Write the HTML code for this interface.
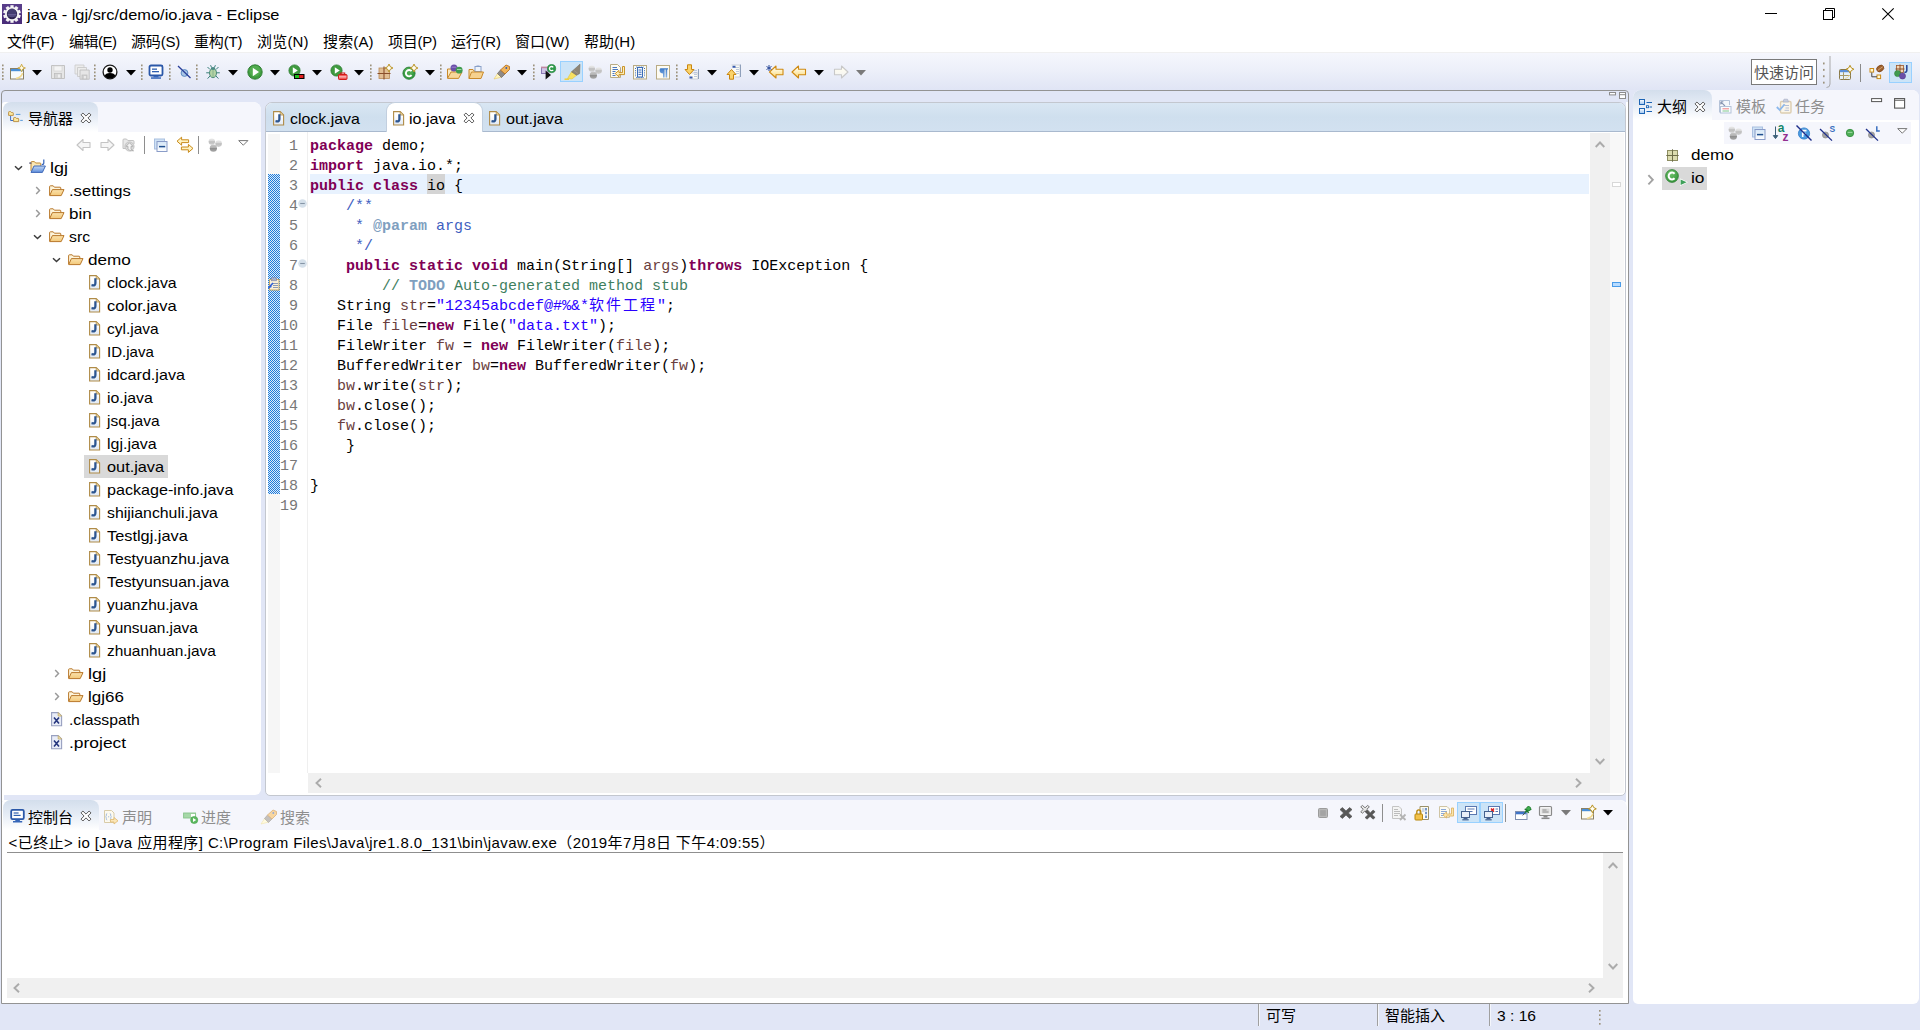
<!DOCTYPE html><html lang="zh-CN"><head><meta charset="utf-8"><title>java - lgj/src/demo/io.java - Eclipse</title><style>
*{box-sizing:border-box;margin:0;padding:0}
html,body{width:1920px;height:1030px;overflow:hidden;background:#e1e6f6}
body{position:relative;font-family:"Liberation Sans","Noto Sans CJK SC",sans-serif;font-size:15px;color:#000}
div,span.t,span.m,span.g,svg.i,pre{position:absolute}
span.t,span.g,span.m{white-space:pre;line-height:20px;height:20px}
span.t{color:#000}
span.g{color:#8e8e8e}
.zh{letter-spacing:2px}
pre{font-family:"Liberation Mono","Noto Sans CJK SC",monospace;font-size:15px;line-height:20px;height:20px;white-space:pre;color:#000}
pre b{color:#7f0055}
.c{color:#3f5fbf}.ct{color:#7f9fbf;font-weight:bold}.cm{color:#3f7f5f}.s{color:#2a00ff}.v{color:#6a3e3e}
.ln{color:#787878;text-align:right;width:40px}
svg.i{overflow:visible}
</style></head><body>
<div style="left:0px;top:0px;width:1920px;height:52px;background:#fff"></div>
<svg class="i" style="left:2px;top:4px" width="20" height="20" viewBox="0 0 20 20"><rect x="0" y="0" width="20" height="20" fill="#4a2d7a"/><rect x="0" y="0" width="20" height="10" fill="#5e4490" opacity=".7"/><g fill="#f4f4f4"><rect x="8.4" y="1.2" width="3.2" height="4" transform="rotate(0 10 10)"/><rect x="8.4" y="1.2" width="3.2" height="4" transform="rotate(36 10 10)"/><rect x="8.4" y="1.2" width="3.2" height="4" transform="rotate(72 10 10)"/><rect x="8.4" y="1.2" width="3.2" height="4" transform="rotate(108 10 10)"/><rect x="8.4" y="1.2" width="3.2" height="4" transform="rotate(144 10 10)"/><rect x="8.4" y="1.2" width="3.2" height="4" transform="rotate(180 10 10)"/><rect x="8.4" y="1.2" width="3.2" height="4" transform="rotate(216 10 10)"/><rect x="8.4" y="1.2" width="3.2" height="4" transform="rotate(252 10 10)"/><rect x="8.4" y="1.2" width="3.2" height="4" transform="rotate(288 10 10)"/><rect x="8.4" y="1.2" width="3.2" height="4" transform="rotate(324 10 10)"/></g><circle cx="10" cy="10" r="7" fill="#f4f4f4"/><circle cx="10" cy="10" r="5.2" fill="#2c2450"/><circle cx="10" cy="9" r="4.4" fill="#4a4478" opacity=".8"/><path d="M5.5 10.5h9 M5.8 12h8.4" stroke="#8a80b8" stroke-width=".6" opacity=".8"/></svg>
<span class="t" style="left:27px;top:5px;transform:scaleX(1.0934);transform-origin:0 50%;">java - lgj/src/demo/io.java - Eclipse</span>
<svg class="i" style="left:1760px;top:4px" width="150" height="22" viewBox="0 0 150 22"><path d="M5 9.5h12" stroke="#000" stroke-width="1"/><rect x="63.5" y="6.5" width="9" height="9" fill="none" stroke="#000"/><path d="M65.5 6.5v-2h9v9h-2" fill="none" stroke="#000"/><path d="M122.3 4.3l11.4 11.4M133.7 4.3L122.3 15.7" stroke="#000" stroke-width="1.1"/></svg>
<span class="t" style="left:7px;top:31.5px;letter-spacing:-0.389px;">文件(F)</span>
<span class="t" style="left:69px;top:31.5px;letter-spacing:-0.500px;">编辑(E)</span>
<span class="t" style="left:131px;top:31.5px;letter-spacing:-0.175px;">源码(S)</span>
<span class="t" style="left:194px;top:31.5px;letter-spacing:-0.139px;">重构(T)</span>
<span class="t" style="left:257px;top:31.5px;letter-spacing:0.193px;">浏览(N)</span>
<span class="t" style="left:323px;top:31.5px;letter-spacing:0.150px;">搜索(A)</span>
<span class="t" style="left:388px;top:31.5px;letter-spacing:-0.250px;">项目(P)</span>
<span class="t" style="left:451px;top:31.5px;letter-spacing:-0.207px;">运行(R)</span>
<span class="t" style="left:515px;top:31.5px;letter-spacing:0.111px;">窗口(W)</span>
<span class="t" style="left:584px;top:31.5px;letter-spacing:0.118px;">帮助(H)</span>
<div style="left:0px;top:52px;width:1920px;height:38px;background:linear-gradient(#f6f7fd,#eceff9 50%,#e0e5f5)"></div>
<div style="left:0px;top:52px;width:1920px;height:1px;background:#f0f0f0"></div>
<div style="left:560px;top:61px;width:23px;height:21px;background:#cce4f7;border:1px solid #99d1ff"></div>
<svg class="i" style="left:563px;top:62.5px" width="18" height="18" viewBox="0 0 18 18"><path d="M1.5 16.2 H6" stroke="#f0d040" stroke-width="1.6"/><path d="M4.5 15.5 L8.5 8.8 L13.6 12.2 L9 16z" fill="#f7e060" stroke="#e6c838" stroke-width=".6"/><path d="M8.5 8.8 L17 1.2 L16.6 10.6 L13.6 12.2z" fill="#8e8676" stroke="#766e5e" stroke-width=".6"/><path d="M11 7.5 L15 10.5" stroke="#a49c8a" stroke-width=".8"/></svg>
<svg class="i" style="left:2px;top:64px" width="2" height="16" viewBox="0 0 2 16"><rect x="0" y="0.5" width="1.6" height="1.8" fill="#9c927c"/><rect x="0" y="4" width="1.6" height="1.8" fill="#9c927c"/><rect x="0" y="7.5" width="1.6" height="1.8" fill="#9c927c"/><rect x="0" y="11" width="1.6" height="1.8" fill="#9c927c"/><rect x="0" y="14.2" width="1.6" height="1.8" fill="#9c927c"/></svg>
<svg class="i" style="left:9px;top:64px" width="16" height="16" viewBox="0 0 16 16"><rect x="1.5" y="4.5" width="13" height="10.5" fill="#f7fafe" stroke="#8a8064" /><rect x="2" y="5" width="12" height="2.2" fill="#4a90d9"/><path d="M7 14.4 Q12.5 13.4 13.6 9" stroke="#f1d88a" fill="none" stroke-width="1.5"/><path d="M12.6 0.2 L13.8 3 L16.4 4 L13.8 5 L12.6 7.8 L11.4 5 L8.8 4 L11.4 3z" fill="#fffbe6" stroke="#c9a43a" stroke-width="0.9"/></svg>
<svg class="i" style="left:32px;top:70px" width="10" height="5" viewBox="0 0 10 5"><path d="M0 0h10L5 5.4z" fill="#000"/></svg>
<svg class="i" style="left:50px;top:64px" width="16" height="16" viewBox="0 0 16 16"><path d="M1.5 1.5h13v13h-13z" fill="#e6e6e6" stroke="#c2c2c2"/><rect x="4" y="2" width="8" height="5" fill="#f4f4f4" stroke="#cfcfcf" stroke-width=".6"/><rect x="4.5" y="9.5" width="7" height="5" fill="#d6d6d6" stroke="#bdbdbd" stroke-width=".8"/><rect x="8" y="10.5" width="2" height="3" fill="#efefef"/></svg>
<svg class="i" style="left:74px;top:64px" width="16" height="16" viewBox="0 0 16 16"><path d="M1 1h9v9h-9z" fill="#ececec" stroke="#cacaca" stroke-width=".8"/><path d="M3.5 3.5h9v9h-9z" fill="#ececec" stroke="#c6c6c6" stroke-width=".8"/><path d="M6 6h9.2v9.2H6z" fill="#e6e6e6" stroke="#c0c0c0" stroke-width=".9"/><rect x="8" y="11" width="5" height="4" fill="#d2d2d2" stroke="#bcbcbc" stroke-width=".7"/><rect x="10.2" y="12" width="1.5" height="2.4" fill="#f2f2f2"/></svg>
<svg class="i" style="left:94px;top:64px" width="2" height="16" viewBox="0 0 2 16"><rect x="0" y="0.5" width="1.6" height="1.8" fill="#9c927c"/><rect x="0" y="4" width="1.6" height="1.8" fill="#9c927c"/><rect x="0" y="7.5" width="1.6" height="1.8" fill="#9c927c"/><rect x="0" y="11" width="1.6" height="1.8" fill="#9c927c"/><rect x="0" y="14.2" width="1.6" height="1.8" fill="#9c927c"/></svg>
<svg class="i" style="left:102px;top:64px" width="16" height="16" viewBox="0 0 16 16"><circle cx="8" cy="8" r="6.9" fill="#fff" stroke="#1a1a1a" stroke-width="1.3"/><circle cx="8" cy="6" r="2.7" fill="#000"/><path d="M2.6 12.2 Q3.4 9 8 9 Q12.6 9 13.4 12.2 Q11 14.6 8 14.6 Q5 14.6 2.6 12.2z" fill="#000"/></svg>
<svg class="i" style="left:126px;top:70px" width="10" height="5" viewBox="0 0 10 5"><path d="M0 0h10L5 5.4z" fill="#000"/></svg>
<svg class="i" style="left:141px;top:64px" width="2" height="16" viewBox="0 0 2 16"><rect x="0" y="0.5" width="1.6" height="1.8" fill="#9c927c"/><rect x="0" y="4" width="1.6" height="1.8" fill="#9c927c"/><rect x="0" y="7.5" width="1.6" height="1.8" fill="#9c927c"/><rect x="0" y="11" width="1.6" height="1.8" fill="#9c927c"/><rect x="0" y="14.2" width="1.6" height="1.8" fill="#9c927c"/></svg>
<svg class="i" style="left:148px;top:64px" width="16" height="16" viewBox="0 0 16 16"><rect x="1.5" y="1.5" width="13" height="10" rx="1.5" fill="#fff" stroke="#2a57a8" stroke-width="1.8"/><rect x="4" y="4.5" width="5" height="1.3" fill="#2f5fb0"/><rect x="4" y="7" width="7" height="1.3" fill="#2f5fb0"/><rect x="5.5" y="12" width="5" height="1.4" fill="#3666b8"/><rect x="3" y="13.3" width="10" height="1.5" fill="#3666b8"/></svg>
<svg class="i" style="left:169px;top:64px" width="2" height="16" viewBox="0 0 2 16"><rect x="0" y="0.5" width="1.6" height="1.8" fill="#9c927c"/><rect x="0" y="4" width="1.6" height="1.8" fill="#9c927c"/><rect x="0" y="7.5" width="1.6" height="1.8" fill="#9c927c"/><rect x="0" y="11" width="1.6" height="1.8" fill="#9c927c"/><rect x="0" y="14.2" width="1.6" height="1.8" fill="#9c927c"/></svg>
<svg class="i" style="left:176px;top:64px" width="16" height="16" viewBox="0 0 16 16"><circle cx="8.5" cy="9" r="3.4" fill="#a9c6e6" stroke="#5c8ac2" stroke-width="1"/><path d="M2 2 L14.5 14" stroke="#2a3f9a" stroke-width="1.3"/></svg>
<svg class="i" style="left:196px;top:64px" width="2" height="16" viewBox="0 0 2 16"><rect x="0" y="0.5" width="1.6" height="1.8" fill="#9c927c"/><rect x="0" y="4" width="1.6" height="1.8" fill="#9c927c"/><rect x="0" y="7.5" width="1.6" height="1.8" fill="#9c927c"/><rect x="0" y="11" width="1.6" height="1.8" fill="#9c927c"/><rect x="0" y="14.2" width="1.6" height="1.8" fill="#9c927c"/></svg>
<svg class="i" style="left:205px;top:64px" width="16" height="16" viewBox="0 0 16 16"><g stroke="#3a7f7a" stroke-width="1" fill="none"><path d="M5 5.5 L2.5 3 M11 5.5 L13.5 3 M4.2 8.8 H1.2 M11.8 8.8 H14.8 M5 12 L2.6 14.6 M11 12 L13.4 14.6 M6.6 3.6 L5.6 1.2 M9.4 3.6 L10.4 1.2"/></g><ellipse cx="8" cy="9" rx="3.5" ry="4.7" fill="#b4d4a4" stroke="#4a8a78" stroke-width="1"/><ellipse cx="8" cy="4.5" rx="2.1" ry="1.6" fill="#4a8a84"/><path d="M8 5.5 V13.5" stroke="#7aa88a" stroke-width=".7"/></svg>
<svg class="i" style="left:228px;top:70px" width="10" height="5" viewBox="0 0 10 5"><path d="M0 0h10L5 5.4z" fill="#000"/></svg>
<svg class="i" style="left:247px;top:64px" width="16" height="16" viewBox="0 0 16 16"><circle cx="8" cy="8" r="7.2" fill="#3f9b3f" stroke="#2a7a2e" stroke-width=".9"/><circle cx="8" cy="7" r="5.5" fill="#5fb75a" opacity=".6"/><path d="M5.8 3.8 L12 8 L5.8 12.2z" fill="#fff"/></svg>
<svg class="i" style="left:270px;top:70px" width="10" height="5" viewBox="0 0 10 5"><path d="M0 0h10L5 5.4z" fill="#000"/></svg>
<svg class="i" style="left:288px;top:64px" width="18" height="16" viewBox="0 0 18 16"><circle cx="6.5" cy="6.5" r="5.6" fill="#3f9b3f" stroke="#2a7a2e" stroke-width=".8"/><path d="M4.8 3.2 L9.8 6.5 L4.8 9.8z" fill="#fff"/><rect x="6" y="10" width="10.5" height="5" fill="#000"/><rect x="7" y="11" width="4" height="3" fill="#1fc01f"/><rect x="11.2" y="11" width="4.2" height="3" fill="#e21f1f"/></svg>
<svg class="i" style="left:312px;top:70px" width="10" height="5" viewBox="0 0 10 5"><path d="M0 0h10L5 5.4z" fill="#000"/></svg>
<svg class="i" style="left:330px;top:64px" width="18" height="16" viewBox="0 0 18 16"><circle cx="6.5" cy="6.5" r="5.6" fill="#3f9b3f" stroke="#2a7a2e" stroke-width=".8"/><path d="M4.8 3.2 L9.8 6.5 L4.8 9.8z" fill="#fff"/><rect x="8.5" y="10.5" width="8.5" height="5" rx=".8" fill="#f25a5a" stroke="#d11a1a" stroke-width="1"/><path d="M10.8 10.3 V9 H14.7 V10.3" stroke="#d11a1a" fill="none" stroke-width="1.1"/><rect x="9" y="12.4" width="7.5" height="1" fill="#fff" opacity=".8"/></svg>
<svg class="i" style="left:354px;top:70px" width="10" height="5" viewBox="0 0 10 5"><path d="M0 0h10L5 5.4z" fill="#000"/></svg>
<svg class="i" style="left:370px;top:64px" width="2" height="16" viewBox="0 0 2 16"><rect x="0" y="0.5" width="1.6" height="1.8" fill="#9c927c"/><rect x="0" y="4" width="1.6" height="1.8" fill="#9c927c"/><rect x="0" y="7.5" width="1.6" height="1.8" fill="#9c927c"/><rect x="0" y="11" width="1.6" height="1.8" fill="#9c927c"/><rect x="0" y="14.2" width="1.6" height="1.8" fill="#9c927c"/></svg>
<svg class="i" style="left:377px;top:64px" width="16" height="16" viewBox="0 0 16 16"><rect x="2" y="4" width="10.5" height="10.5" fill="#e2bf94" stroke="#b98a55" stroke-width=".8"/><path d="M7 2.5 V15.5 M0.5 9.5 H13.5" stroke="#8a4f2a" stroke-width="1.1"/><path d="M12 0.10000000000000009 L13.3 2.7 L15.9 4 L13.3 5.3 L12 7.9 L10.7 5.3 L8.1 4 L10.7 2.7z" fill="#fffdf2" stroke="#b8901f" stroke-width="1"/></svg>
<svg class="i" style="left:402px;top:64px" width="16" height="16" viewBox="0 0 16 16"><circle cx="7" cy="9.2" r="6.1" fill="#369a42" stroke="#24782e" stroke-width=".8"/><circle cx="6.6" cy="8" r="4.4" fill="#62b85e" opacity=".5"/><path d="M9.6 7.2 A3.2 3.2 0 1 0 9.6 11.2" stroke="#fff" stroke-width="1.9" fill="none"/><path d="M12 0.10000000000000009 L13.3 2.7 L15.9 4 L13.3 5.3 L12 7.9 L10.7 5.3 L8.1 4 L10.7 2.7z" fill="#fffdf2" stroke="#b8901f" stroke-width="1"/></svg>
<svg class="i" style="left:425px;top:70px" width="10" height="5" viewBox="0 0 10 5"><path d="M0 0h10L5 5.4z" fill="#000"/></svg>
<svg class="i" style="left:440px;top:64px" width="2" height="16" viewBox="0 0 2 16"><rect x="0" y="0.5" width="1.6" height="1.8" fill="#9c927c"/><rect x="0" y="4" width="1.6" height="1.8" fill="#9c927c"/><rect x="0" y="7.5" width="1.6" height="1.8" fill="#9c927c"/><rect x="0" y="11" width="1.6" height="1.8" fill="#9c927c"/><rect x="0" y="14.2" width="1.6" height="1.8" fill="#9c927c"/></svg>
<svg class="i" style="left:446px;top:64px" width="18" height="16" viewBox="0 0 18 16"><path d="M1.5 14 V5 H5.4 L6.4 6.4 H13 V8" fill="#fbe9c0" stroke="#c98a2b" stroke-width="1"/><path d="M1.5 14.4 L5 8 H16 L12.6 14.4z" fill="#f7d79a" stroke="#c98a2b" stroke-width="1" stroke-linejoin="round"/><circle cx="8" cy="4" r="3.5" fill="#6a4fa8"/><path d="M5.6 3.2h4.8" stroke="#a08ad0" stroke-width=".9"/><circle cx="13.2" cy="6.2" r="3.4" fill="#3f9b4f"/><path d="M11 5.5h4.4" stroke="#a8dcb0" stroke-width=".9"/></svg>
<svg class="i" style="left:468px;top:64px" width="18" height="16" viewBox="0 0 18 16"><path d="M1 14.5 V5.5 H5 L6 7 H13 V8" fill="#fbe3b0" stroke="#c98a2b" stroke-width="1"/><rect x="7" y="2.5" width="6" height="5" fill="#eef3fb" stroke="#8aa0c8" stroke-width="1"/><rect x="8.5" y="1.5" width="3" height="1.5" fill="#8aa0c8"/><path d="M1 14.5 L3.5 8 H15.5 L13 14.5z" fill="#f6d28f" stroke="#c98a2b" stroke-width="1"/></svg>
<svg class="i" style="left:493px;top:64px" width="18" height="16" viewBox="0 0 18 16"><path d="M1 15 L5 9 L9 13z" fill="#fff6c0" stroke="#e8c860" stroke-width=".6"/><path d="M4.5 9.5 L7.5 6 L12 10 L8.5 13.5z" fill="#8f8a86" stroke="#6a6460" stroke-width=".7"/><path d="M7.5 6 L13 1 L16.5 2.5 L16.5 5.5 L12 10z" fill="#f2b45a" stroke="#b87320" stroke-width=".9"/><circle cx="13.3" cy="4" r=".9" fill="#2f5fb8"/></svg>
<svg class="i" style="left:517px;top:70px" width="10" height="5" viewBox="0 0 10 5"><path d="M0 0h10L5 5.4z" fill="#000"/></svg>
<svg class="i" style="left:533px;top:64px" width="2" height="16" viewBox="0 0 2 16"><rect x="0" y="0.5" width="1.6" height="1.8" fill="#9c927c"/><rect x="0" y="4" width="1.6" height="1.8" fill="#9c927c"/><rect x="0" y="7.5" width="1.6" height="1.8" fill="#9c927c"/><rect x="0" y="11" width="1.6" height="1.8" fill="#9c927c"/><rect x="0" y="14.2" width="1.6" height="1.8" fill="#9c927c"/></svg>
<svg class="i" style="left:539px;top:64px" width="18" height="16" viewBox="0 0 18 16"><rect x="2.5" y="3.5" width="6.5" height="6" fill="#cfc4e6" stroke="#8a7ab5" stroke-width="1"/><rect x="2" y="2.6" width="7.5" height="1.6" fill="#c08aa0"/><path d="M6.6 6.5 V15.6 L12 11z" fill="#111"/><circle cx="12.6" cy="4.6" r="4.1" fill="#2e9b4a" stroke="#1d7a34" stroke-width=".6"/><path d="M14.2 3.3 A2.1 2.1 0 1 0 14.2 5.9" stroke="#fff" stroke-width="1.3" fill="none"/></svg>
<svg class="i" style="left:587px;top:64px" width="16" height="16" viewBox="0 0 16 16"><defs><linearGradient id="gs1" x1="0" y1="0" x2="0" y2="1"><stop offset="0" stop-color="#ececec"/><stop offset=".45" stop-color="#d4d4d4"/><stop offset=".5" stop-color="#bcbcbc"/><stop offset="1" stop-color="#d0d0d0"/></linearGradient><linearGradient id="gs2" x1="0" y1="0" x2="0" y2="1"><stop offset="0" stop-color="#c8c8c8"/><stop offset=".45" stop-color="#b0b0b0"/><stop offset=".5" stop-color="#8e8e8e"/><stop offset="1" stop-color="#a8a8a8"/></linearGradient></defs><circle cx="4.8" cy="4.6" r="3.2" fill="url(#gs1)"/><circle cx="11.6" cy="6.6" r="3.3" fill="url(#gs1)"/><circle cx="6.4" cy="11.2" r="3.6" fill="url(#gs2)"/></svg>
<svg class="i" style="left:609px;top:64px" width="16" height="16" viewBox="0 0 16 16"><path d="M1.5 0.5 H8.5 L11.5 3.5 V13.5 H1.5z" fill="#fdfbf2" stroke="#b9ab84" stroke-width="1"/><path d="M3.5 3.5h4.5 M3.5 5.5h5.5 M3.5 7.5h3 M3.5 9.5h2 M3.5 11.5h3" stroke="#4a78c0" stroke-width="1"/><path d="M13.5 2.5 H15.5 V10.6 H10 V12.8 L6.2 9.6 L10 6.4 V8.6 H13.5z" fill="#fdeeb8" stroke="#c58a1a" stroke-width=".9" stroke-linejoin="round"/></svg>
<svg class="i" style="left:632px;top:64px" width="16" height="16" viewBox="0 0 16 16"><rect x="1.5" y="1.5" width="13" height="13.5" fill="#fdfbf2" stroke="#b9ab84" stroke-width="1"/><rect x="5.5" y="3.5" width="5" height="9.5" fill="#f4f8fd" stroke="#3b6cb8" stroke-width="1"/><path d="M6.5 6h3 M6.5 8.2h3 M6.5 10.4h3" stroke="#3b6cb8" stroke-width="1"/><path d="M3.5 4v9 M12.5 4v9" stroke="#3b6cb8" stroke-width="1" stroke-dasharray="1 1.2"/><path d="M4 3h8 M4 13.6h8" stroke="#3b6cb8" stroke-width=".8" stroke-dasharray="1.4 1"/></svg>
<svg class="i" style="left:655px;top:64px" width="16" height="16" viewBox="0 0 16 16"><defs><linearGradient id="plg" x1="0" y1="0" x2="0" y2="1"><stop offset="0" stop-color="#3a78c8"/><stop offset="1" stop-color="#8ab4e4"/></linearGradient></defs><rect x="1.5" y="1.5" width="13" height="13.5" fill="#fdfbf2" stroke="#b9ab84" stroke-width="1"/><path d="M5.5 4.2 H13 V5.6 H12.2 V13.4 H10.6 V5.6 H9.6 V13.4 H8 V9.4 Q5 9.4 4.6 6.8 Q4.4 4.4 5.5 4.2z" fill="url(#plg)"/></svg>
<svg class="i" style="left:676px;top:64px" width="2" height="16" viewBox="0 0 2 16"><rect x="0" y="0.5" width="1.6" height="1.8" fill="#9c927c"/><rect x="0" y="4" width="1.6" height="1.8" fill="#9c927c"/><rect x="0" y="7.5" width="1.6" height="1.8" fill="#9c927c"/><rect x="0" y="11" width="1.6" height="1.8" fill="#9c927c"/><rect x="0" y="14.2" width="1.6" height="1.8" fill="#9c927c"/></svg>
<svg class="i" style="left:684px;top:64px" width="16" height="16" viewBox="0 0 16 16"><path d="M6.5 9 H14 V15 H6.5" fill="#fbfbf6" stroke="#c0c6d2" stroke-width=".8"/><path d="M14.5 5 V15" stroke="#8fa0bb" stroke-width="1"/><path d="M9 6.5h4 M10 8.5h3 M10 10.5h3 M10 12.5h3" stroke="#b7c3d8" stroke-width=".9"/><rect x="5.5" y="12.5" width="3" height="2" fill="#3b5cae"/><path d="M3.5 0.8 H7.5 V5.5 H10 L5.5 10.5 L1 5.5 H3.5z" fill="#fbd36a" stroke="#c9860f" stroke-width="1"/></svg>
<svg class="i" style="left:707px;top:70px" width="10" height="5" viewBox="0 0 10 5"><path d="M0 0h10L5 5.4z" fill="#000"/></svg>
<svg class="i" style="left:726px;top:64px" width="16" height="16" viewBox="0 0 16 16"><path d="M5.5 1 H14 V13 H9" fill="#fbfbf6" stroke="#c0c6d2" stroke-width=".8"/><path d="M14.5 0.5 V13" stroke="#8fa0bb" stroke-width="1"/><path d="M9 3.5h4 M10 5.5h3 M10 7.5h3 M10 9.5h3" stroke="#b7c3d8" stroke-width=".9"/><rect x="6.5" y="1.8" width="3" height="2" fill="#3b5cae"/><path d="M3.5 15.2 H7.5 V10.5 H10 L5.5 5.5 L1 10.5 H3.5z" fill="#fbd36a" stroke="#c9860f" stroke-width="1"/></svg>
<svg class="i" style="left:749px;top:70px" width="10" height="5" viewBox="0 0 10 5"><path d="M0 0h10L5 5.4z" fill="#000"/></svg>
<svg class="i" style="left:766px;top:64px" width="18" height="16" viewBox="0 0 18 16"><g transform="translate(2.5,0)"><defs><linearGradient id="agfbd870" x1="0" y1="0" x2="0" y2="1"><stop offset="0.15" stop-color="#fffdf0"/><stop offset="1" stop-color="#fbd870"/></linearGradient></defs><path d="M1 8 L7.5 2 V5.2 H14.5 V10.8 H7.5 V14z" fill="url(#agfbd870)" stroke="#cf8a12" stroke-width="1.1" stroke-linejoin="round"/></g><path d="M3 1v6 M0.5 2.5l5 3 M5.5 2.5l-5 3" stroke="#2b4a9a" stroke-width="1"/></svg>
<svg class="i" style="left:791px;top:64px" width="16" height="16" viewBox="0 0 16 16"><defs><linearGradient id="agfbd870" x1="0" y1="0" x2="0" y2="1"><stop offset="0.15" stop-color="#fffdf0"/><stop offset="1" stop-color="#fbd870"/></linearGradient></defs><path d="M1 8 L7.5 2 V5.2 H14.5 V10.8 H7.5 V14z" fill="url(#agfbd870)" stroke="#cf8a12" stroke-width="1.1" stroke-linejoin="round"/></svg>
<svg class="i" style="left:814px;top:70px" width="10" height="5" viewBox="0 0 10 5"><path d="M0 0h10L5 5.4z" fill="#000"/></svg>
<svg class="i" style="left:833px;top:64px" width="16" height="16" viewBox="0 0 16 16"><g transform="translate(16,0) scale(-1,1)"><defs><linearGradient id="agf3f3f3" x1="0" y1="0" x2="0" y2="1"><stop offset="0.15" stop-color="#fffdf0"/><stop offset="1" stop-color="#f3f3f3"/></linearGradient></defs><path d="M1 8 L7.5 2 V5.2 H14.5 V10.8 H7.5 V14z" fill="url(#agf3f3f3)" stroke="#c8c8c8" stroke-width="1.1" stroke-linejoin="round"/></g></svg>
<svg class="i" style="left:856px;top:70px" width="10" height="5" viewBox="0 0 10 5"><path d="M0 0h10L5 5.4z" fill="#7a7a7a"/></svg>
<div style="left:1751px;top:59px;width:66px;height:26px;background:#fff;border:1px solid #7a7a7a"></div>
<span class="t" style="left:1754px;top:63.3px;color:#555">快速访问</span>
<svg class="i" style="left:1823px;top:61.5px" width="2" height="22" viewBox="0 0 2 22"><rect x="0" y="0.5" width="1.6" height="1.9" fill="#9c927c"/><rect x="0" y="6.9" width="1.6" height="1.9" fill="#9c927c"/><rect x="0" y="13.3" width="1.6" height="1.9" fill="#9c927c"/><rect x="0" y="19.7" width="1.6" height="1.9" fill="#9c927c"/></svg>
<svg class="i" style="left:1825px;top:56px" width="7" height="34" viewBox="0 0 7 34"><path d="M5 0 V28 Q5 31.5 1.5 31.5" stroke="#a9a9a9" fill="none"/></svg>
<svg class="i" style="left:1838px;top:65px" width="16" height="16" viewBox="0 0 16 16"><rect x="1.5" y="4.5" width="11" height="10" rx="1" fill="#e4f1fb" stroke="#8a7a4a" stroke-width="1"/><rect x="2" y="5" width="10" height="2.2" fill="#5a8fd8"/><path d="M5.5 7.2 V14.5 M1.5 10.5 H12.5" stroke="#a89a68" stroke-width="1"/><path d="M7 13.5 Q10.5 13 11.5 10" stroke="#f1dc9a" stroke-width="1" fill="none"/><path d="M12 0.30000000000000027 L13.3 2.9000000000000004 L15.9 4.2 L13.3 5.5 L12 8.1 L10.7 5.5 L8.1 4.2 L10.7 2.9000000000000004z" fill="#fffdf2" stroke="#b8901f" stroke-width="1"/></svg>
<div style="left:1860px;top:64px;width:1px;height:18px;background:#8a8a8a"></div>
<svg class="i" style="left:1869px;top:64px" width="16" height="16" viewBox="0 0 16 16"><rect x="1" y="4.5" width="3.6" height="3.6" fill="#fff8d0" stroke="#c98a1a" stroke-width="1"/><rect x="8" y="11" width="3.6" height="3.6" fill="#fff8d0" stroke="#c98a1a" stroke-width="1"/><path d="M2.8 8.5 V12.8 H8" stroke="#444" stroke-width="1" fill="none"/><ellipse cx="11.2" cy="4.5" rx="3.8" ry="2.9" transform="rotate(-35 11.2 4.5)" fill="#a0622d" stroke="#7a3f14" stroke-width=".7"/><path d="M8.8 6.4 Q11 4.5 13.8 2.8" stroke="#e0b48a" stroke-width=".8" fill="none"/></svg>
<div style="left:1889px;top:62px;width:23px;height:21px;background:#cce4f7;border:1px solid #99d1ff"></div>
<svg class="i" style="left:1893px;top:64px" width="16" height="16" viewBox="0 0 16 16"><rect x="3.5" y="1.5" width="7" height="7" fill="#f0d6b4" stroke="#a0562a" stroke-width=".8"/><path d="M7 0.5 V9.5 M2.5 5h9" stroke="#8a4f2a" stroke-width="1"/><circle cx="4.6" cy="9.5" r="3.1" fill="#3f9b4f" stroke="#2a7a34" stroke-width=".5"/><circle cx="9.5" cy="12" r="3.1" fill="#6a4fa8" stroke="#503a8a" stroke-width=".5"/><path d="M13.8 1 V6.2 Q13.8 8.4 11.4 8.2" stroke="#2b4a9a" stroke-width="1.6" fill="none"/></svg>
<div style="left:1px;top:90px;width:1628px;height:914px;border:1px solid #939393;border-radius:4px 4px 0 0;background:#e1e6f6"></div>
<div style="left:2px;top:102px;width:259px;height:693px;background:#fff;border-radius:3px 8px 6px 0"></div>
<div style="left:3px;top:102px;width:258px;height:30px;background:#f5f6fc;border-radius:8px 8px 0 0"></div>
<div style="left:3px;top:102px;width:95px;height:30px;background:linear-gradient(#d3deec,#e4ebf5 45%,#fff);border-radius:8px 8px 0 0"></div>
<svg class="i" style="left:8px;top:110.5px" width="16" height="12" viewBox="0 0 16 12"><path d="M2.6 5 V9.5 H5.5" stroke="#3f6fc0" stroke-width="1" fill="none"/><path d="M0.6 4.4 V1.3 Q0.6 0.6 1.3 0.6 H2.6 L3.4 1.5 H4.6 Q5.3 1.5 5.3 2.2 V4.4z" fill="#fbe9a0" stroke="#b98a3a" stroke-width=".9"/><path d="M5.6 10.6 V7.2 Q5.6 6.5 6.3 6.5 H7.6 L8.4 7.4 H10 Q10.7 7.4 10.7 8.1 V10.6z" fill="#fbe9a0" stroke="#b98a3a" stroke-width=".9"/><path d="M7.8 3.4h4.6 M12.2 9.4h2.6" stroke="#5a9ad8" stroke-width="1"/></svg>
<span class="t" style="left:28px;top:109px;">导航器</span>
<svg class="i" style="left:80px;top:112px" width="12" height="12" viewBox="0 0 12 12"><path d="M1 2.9 L2.9 1 L6 4.1 L9.1 1 L11 2.9 L7.9 6 L11 9.1 L9.1 11 L6 7.9 L2.9 11 L1 9.1 L4.1 6z" fill="#fff" stroke="#5c5c5c" stroke-width="1" stroke-linejoin="miter"/></svg>
<svg class="i" style="left:76px;top:136.5px" width="16" height="16" viewBox="0 0 16 16"><path d="M1 8 L7 2.5 V5.5 H14 V10.5 H7 V13.5z" fill="#f6f6f6" stroke="#c4c4c4" stroke-width="1.1" stroke-linejoin="round"/></svg>
<svg class="i" style="left:99px;top:136.5px" width="16" height="16" viewBox="0 0 16 16"><g transform="translate(16,0) scale(-1,1)"><path d="M1 8 L7 2.5 V5.5 H14 V10.5 H7 V13.5z" fill="#f6f6f6" stroke="#c4c4c4" stroke-width="1.1" stroke-linejoin="round"/></g></svg>
<svg class="i" style="left:121px;top:136.5px" width="16" height="16" viewBox="0 0 16 16"><path d="M2 11.5 V3 Q2 2 3 2 H5.5 L6.8 3.5 H12 Q13 3.5 13 4.5 V7" fill="#e9e9e9" stroke="#c2c2c2" stroke-width="1"/><path d="M2 11.5 H5.5" stroke="#c2c2c2"/><circle cx="8.5" cy="9.5" r="4.6" fill="#d9d9d9" stroke="#bdbdbd" stroke-width=".8"/><path d="M8.5 5.8 L12 9.3 H10 V11.6 Q10 13.6 12.6 13.8 Q8 14.6 7 11.6 V9.3 H5z" fill="#f4f4f4" stroke="#a8a8a8" stroke-width=".8" stroke-linejoin="round"/></svg>
<svg class="i" style="left:153px;top:136.5px" width="16" height="16" viewBox="0 0 16 16"><defs><linearGradient id="cg" x1="0" y1="0" x2="0" y2="1"><stop offset="0" stop-color="#d4e6f7"/><stop offset="1" stop-color="#ffffff"/></linearGradient></defs><rect x="1.5" y="2" width="10" height="10" fill="#cfe2f5" stroke="#a9bfe0" stroke-width="1"/><rect x="4" y="4.5" width="10" height="10" fill="url(#cg)" stroke="#8a9cc8" stroke-width="1"/><path d="M6 9.6h6.2" stroke="#1f4f8f" stroke-width="1.5"/></svg>
<svg class="i" style="left:175.5px;top:135.5px" width="18" height="18" viewBox="0 0 18 18"><path d="M1 5.2 L5.6 1.2 V3.8 H12.6 V6.6 H5.6 V9.2z" fill="#fff3c0" stroke="#c98a1a" stroke-width="1" stroke-linejoin="miter"/><path d="M17 12.4 L12.4 8.4 V11 H5.4 V13.8 H12.4 V16.4z" fill="#fff3c0" stroke="#c98a1a" stroke-width="1" stroke-linejoin="miter"/></svg>
<svg class="i" style="left:207px;top:136.5px" width="16" height="16" viewBox="0 0 16 16"><defs><linearGradient id="gs1" x1="0" y1="0" x2="0" y2="1"><stop offset="0" stop-color="#ececec"/><stop offset=".45" stop-color="#d4d4d4"/><stop offset=".5" stop-color="#bcbcbc"/><stop offset="1" stop-color="#d0d0d0"/></linearGradient><linearGradient id="gs2" x1="0" y1="0" x2="0" y2="1"><stop offset="0" stop-color="#c8c8c8"/><stop offset=".45" stop-color="#b0b0b0"/><stop offset=".5" stop-color="#8e8e8e"/><stop offset="1" stop-color="#a8a8a8"/></linearGradient></defs><circle cx="4.8" cy="4.6" r="3.2" fill="url(#gs1)"/><circle cx="11.6" cy="6.6" r="3.3" fill="url(#gs1)"/><circle cx="6.4" cy="11.2" r="3.6" fill="url(#gs2)"/></svg>
<svg class="i" style="left:238px;top:140px" width="11" height="6" viewBox="0 0 11 6"><path d="M0.7 0.6 H9.9 L5.3 5.2z" fill="#fff" stroke="#666" stroke-width=".9"/></svg>
<div style="left:144px;top:136px;width:1px;height:18px;background:#8e8e8e"></div>
<div style="left:198px;top:136px;width:1px;height:18px;background:#8e8e8e"></div>
<svg class="i" style="left:13.5px;top:164.5px" width="9" height="6" viewBox="0 0 9 6"><path d="M1 1.2 L4.5 4.5 L8 1.2" stroke="#3c3c3c" stroke-width="1.5" fill="none"/></svg>
<svg class="i" style="left:28.5px;top:158.7px" width="18" height="15" viewBox="0 0 18 15"><defs><linearGradient id="pg" x1="0" y1="0" x2="0" y2="1"><stop offset="0" stop-color="#c4d8f4"/><stop offset="1" stop-color="#5f8fdc"/></linearGradient></defs><path d="M2 12 V3.4 Q2 2.6 2.8 2.6 H5.4 L6.6 4 H11 Q11.8 4 11.8 4.8 V7" fill="#fbe7b4" stroke="#c08a34" stroke-width="1"/><path d="M2 13.4 L5 7 H16.4 L13.4 13.4z" fill="url(#pg)" stroke="#3f68b8" stroke-width="1" stroke-linejoin="round"/><path d="M14.8 0.4 V4 Q14.8 5.6 12.8 5.4" stroke="#2f5fb8" stroke-width="1.2" fill="none"/><rect x="0.3" y="3.4" width="2.2" height="1.4" fill="#5a5a7a"/></svg>
<span class="t" style="left:50px;top:157.5px;transform:scaleX(1.1988);transform-origin:0 50%;">lgj</span>
<svg class="i" style="left:34.5px;top:186px" width="6" height="9" viewBox="0 0 6 9"><path d="M1.2 1 L4.5 4.5 L1.2 8" stroke="#9a9a9a" stroke-width="1.5" fill="none"/></svg>
<svg class="i" style="left:49.3px;top:184.7px" width="16" height="12" viewBox="0 0 16 12"><defs><linearGradient id="fg" x1="0" y1="0" x2="0" y2="1"><stop offset="0" stop-color="#fbe3ae"/><stop offset="1" stop-color="#f3c878"/></linearGradient></defs><path d="M0.6 10.2 V1.6 Q0.6 0.8 1.4 0.8 H4.2 L5.4 2.2 H11 Q11.8 2.2 11.8 3 V4.6" fill="#fdf4da" stroke="#b9782a" stroke-width="1"/><path d="M0.7 10.6 L3.4 4.6 H15 L12.2 10.6z" fill="url(#fg)" stroke="#b9782a" stroke-width="1" stroke-linejoin="round"/></svg>
<span class="t" style="left:69px;top:180.5px;transform:scaleX(1.1078);transform-origin:0 50%;">.settings</span>
<svg class="i" style="left:34.5px;top:209px" width="6" height="9" viewBox="0 0 6 9"><path d="M1.2 1 L4.5 4.5 L1.2 8" stroke="#9a9a9a" stroke-width="1.5" fill="none"/></svg>
<svg class="i" style="left:49.3px;top:207.7px" width="16" height="12" viewBox="0 0 16 12"><defs><linearGradient id="fg" x1="0" y1="0" x2="0" y2="1"><stop offset="0" stop-color="#fbe3ae"/><stop offset="1" stop-color="#f3c878"/></linearGradient></defs><path d="M0.6 10.2 V1.6 Q0.6 0.8 1.4 0.8 H4.2 L5.4 2.2 H11 Q11.8 2.2 11.8 3 V4.6" fill="#fdf4da" stroke="#b9782a" stroke-width="1"/><path d="M0.7 10.6 L3.4 4.6 H15 L12.2 10.6z" fill="url(#fg)" stroke="#b9782a" stroke-width="1" stroke-linejoin="round"/></svg>
<span class="t" style="left:69px;top:203.5px;transform:scaleX(1.1332);transform-origin:0 50%;">bin</span>
<svg class="i" style="left:32.5px;top:233.5px" width="9" height="6" viewBox="0 0 9 6"><path d="M1 1.2 L4.5 4.5 L8 1.2" stroke="#3c3c3c" stroke-width="1.5" fill="none"/></svg>
<svg class="i" style="left:49.3px;top:230.7px" width="16" height="12" viewBox="0 0 16 12"><defs><linearGradient id="fg" x1="0" y1="0" x2="0" y2="1"><stop offset="0" stop-color="#fbe3ae"/><stop offset="1" stop-color="#f3c878"/></linearGradient></defs><path d="M0.6 10.2 V1.6 Q0.6 0.8 1.4 0.8 H4.2 L5.4 2.2 H11 Q11.8 2.2 11.8 3 V4.6" fill="#fdf4da" stroke="#b9782a" stroke-width="1"/><path d="M0.7 10.6 L3.4 4.6 H15 L12.2 10.6z" fill="url(#fg)" stroke="#b9782a" stroke-width="1" stroke-linejoin="round"/></svg>
<span class="t" style="left:69px;top:226.5px;transform:scaleX(1.0550);transform-origin:0 50%;">src</span>
<svg class="i" style="left:51.5px;top:256.5px" width="9" height="6" viewBox="0 0 9 6"><path d="M1 1.2 L4.5 4.5 L8 1.2" stroke="#3c3c3c" stroke-width="1.5" fill="none"/></svg>
<svg class="i" style="left:68.3px;top:253.7px" width="16" height="12" viewBox="0 0 16 12"><defs><linearGradient id="fg" x1="0" y1="0" x2="0" y2="1"><stop offset="0" stop-color="#fbe3ae"/><stop offset="1" stop-color="#f3c878"/></linearGradient></defs><path d="M0.6 10.2 V1.6 Q0.6 0.8 1.4 0.8 H4.2 L5.4 2.2 H11 Q11.8 2.2 11.8 3 V4.6" fill="#fdf4da" stroke="#b9782a" stroke-width="1"/><path d="M0.7 10.6 L3.4 4.6 H15 L12.2 10.6z" fill="url(#fg)" stroke="#b9782a" stroke-width="1" stroke-linejoin="round"/></svg>
<span class="t" style="left:88px;top:249.5px;transform:scaleX(1.1430);transform-origin:0 50%;">demo</span>
<svg class="i" style="left:89px;top:275.3px" width="12" height="15" viewBox="0 0 12 15"><defs><linearGradient id="jg1" x1="0" y1="0" x2="0" y2="1"><stop offset="0.3" stop-color="#ffffff"/><stop offset="1" stop-color="#dfe8f4"/></linearGradient></defs><path d="M0.6 0.6 H7.2 L10.6 4 V14 H0.6z" fill="url(#jg1)" stroke="#b08c48" stroke-width="1.1"/><path d="M7.2 0.6 V4 H10.6z" fill="#f1dfae" stroke="#b08c48" stroke-width=".8"/><path d="M6.4 3.2 V8 Q6.4 10.5 3.9 10.4 L2.5 10.1" stroke="#2c5590" stroke-width="2.3" fill="none"/></svg>
<span class="t" style="left:107px;top:272.5px;transform:scaleX(1.0583);transform-origin:0 50%;">clock.java</span>
<svg class="i" style="left:89px;top:298.3px" width="12" height="15" viewBox="0 0 12 15"><defs><linearGradient id="jg1" x1="0" y1="0" x2="0" y2="1"><stop offset="0.3" stop-color="#ffffff"/><stop offset="1" stop-color="#dfe8f4"/></linearGradient></defs><path d="M0.6 0.6 H7.2 L10.6 4 V14 H0.6z" fill="url(#jg1)" stroke="#b08c48" stroke-width="1.1"/><path d="M7.2 0.6 V4 H10.6z" fill="#f1dfae" stroke="#b08c48" stroke-width=".8"/><path d="M6.4 3.2 V8 Q6.4 10.5 3.9 10.4 L2.5 10.1" stroke="#2c5590" stroke-width="2.3" fill="none"/></svg>
<span class="t" style="left:107px;top:295.5px;transform:scaleX(1.0998);transform-origin:0 50%;">color.java</span>
<svg class="i" style="left:89px;top:321.3px" width="12" height="15" viewBox="0 0 12 15"><defs><linearGradient id="jg1" x1="0" y1="0" x2="0" y2="1"><stop offset="0.3" stop-color="#ffffff"/><stop offset="1" stop-color="#dfe8f4"/></linearGradient></defs><path d="M0.6 0.6 H7.2 L10.6 4 V14 H0.6z" fill="url(#jg1)" stroke="#b08c48" stroke-width="1.1"/><path d="M7.2 0.6 V4 H10.6z" fill="#f1dfae" stroke="#b08c48" stroke-width=".8"/><path d="M6.4 3.2 V8 Q6.4 10.5 3.9 10.4 L2.5 10.1" stroke="#2c5590" stroke-width="2.3" fill="none"/></svg>
<span class="t" style="left:107px;top:318.5px;transform:scaleX(1.0334);transform-origin:0 50%;">cyl.java</span>
<svg class="i" style="left:89px;top:344.3px" width="12" height="15" viewBox="0 0 12 15"><defs><linearGradient id="jg1" x1="0" y1="0" x2="0" y2="1"><stop offset="0.3" stop-color="#ffffff"/><stop offset="1" stop-color="#dfe8f4"/></linearGradient></defs><path d="M0.6 0.6 H7.2 L10.6 4 V14 H0.6z" fill="url(#jg1)" stroke="#b08c48" stroke-width="1.1"/><path d="M7.2 0.6 V4 H10.6z" fill="#f1dfae" stroke="#b08c48" stroke-width=".8"/><path d="M6.4 3.2 V8 Q6.4 10.5 3.9 10.4 L2.5 10.1" stroke="#2c5590" stroke-width="2.3" fill="none"/></svg>
<span class="t" style="left:107px;top:341.5px;transform:scaleX(1.0024);transform-origin:0 50%;">ID.java</span>
<svg class="i" style="left:89px;top:367.3px" width="12" height="15" viewBox="0 0 12 15"><defs><linearGradient id="jg1" x1="0" y1="0" x2="0" y2="1"><stop offset="0.3" stop-color="#ffffff"/><stop offset="1" stop-color="#dfe8f4"/></linearGradient></defs><path d="M0.6 0.6 H7.2 L10.6 4 V14 H0.6z" fill="url(#jg1)" stroke="#b08c48" stroke-width="1.1"/><path d="M7.2 0.6 V4 H10.6z" fill="#f1dfae" stroke="#b08c48" stroke-width=".8"/><path d="M6.4 3.2 V8 Q6.4 10.5 3.9 10.4 L2.5 10.1" stroke="#2c5590" stroke-width="2.3" fill="none"/></svg>
<span class="t" style="left:107px;top:364.5px;transform:scaleX(1.0738);transform-origin:0 50%;">idcard.java</span>
<svg class="i" style="left:89px;top:390.3px" width="12" height="15" viewBox="0 0 12 15"><defs><linearGradient id="jg1" x1="0" y1="0" x2="0" y2="1"><stop offset="0.3" stop-color="#ffffff"/><stop offset="1" stop-color="#dfe8f4"/></linearGradient></defs><path d="M0.6 0.6 H7.2 L10.6 4 V14 H0.6z" fill="url(#jg1)" stroke="#b08c48" stroke-width="1.1"/><path d="M7.2 0.6 V4 H10.6z" fill="#f1dfae" stroke="#b08c48" stroke-width=".8"/><path d="M6.4 3.2 V8 Q6.4 10.5 3.9 10.4 L2.5 10.1" stroke="#2c5590" stroke-width="2.3" fill="none"/></svg>
<span class="t" style="left:107px;top:387.5px;transform:scaleX(1.0563);transform-origin:0 50%;">io.java</span>
<svg class="i" style="left:89px;top:413.3px" width="12" height="15" viewBox="0 0 12 15"><defs><linearGradient id="jg1" x1="0" y1="0" x2="0" y2="1"><stop offset="0.3" stop-color="#ffffff"/><stop offset="1" stop-color="#dfe8f4"/></linearGradient></defs><path d="M0.6 0.6 H7.2 L10.6 4 V14 H0.6z" fill="url(#jg1)" stroke="#b08c48" stroke-width="1.1"/><path d="M7.2 0.6 V4 H10.6z" fill="#f1dfae" stroke="#b08c48" stroke-width=".8"/><path d="M6.4 3.2 V8 Q6.4 10.5 3.9 10.4 L2.5 10.1" stroke="#2c5590" stroke-width="2.3" fill="none"/></svg>
<span class="t" style="left:107px;top:410.5px;transform:scaleX(1.0342);transform-origin:0 50%;">jsq.java</span>
<svg class="i" style="left:89px;top:436.3px" width="12" height="15" viewBox="0 0 12 15"><defs><linearGradient id="jg1" x1="0" y1="0" x2="0" y2="1"><stop offset="0.3" stop-color="#ffffff"/><stop offset="1" stop-color="#dfe8f4"/></linearGradient></defs><path d="M0.6 0.6 H7.2 L10.6 4 V14 H0.6z" fill="url(#jg1)" stroke="#b08c48" stroke-width="1.1"/><path d="M7.2 0.6 V4 H10.6z" fill="#f1dfae" stroke="#b08c48" stroke-width=".8"/><path d="M6.4 3.2 V8 Q6.4 10.5 3.9 10.4 L2.5 10.1" stroke="#2c5590" stroke-width="2.3" fill="none"/></svg>
<span class="t" style="left:107px;top:433.5px;transform:scaleX(1.0642);transform-origin:0 50%;">lgj.java</span>
<div style="left:84px;top:454.5px;width:84px;height:23px;background:#d9d9d9"></div>
<svg class="i" style="left:89px;top:459.3px" width="12" height="15" viewBox="0 0 12 15"><defs><linearGradient id="jg1" x1="0" y1="0" x2="0" y2="1"><stop offset="0.3" stop-color="#ffffff"/><stop offset="1" stop-color="#dfe8f4"/></linearGradient></defs><path d="M0.6 0.6 H7.2 L10.6 4 V14 H0.6z" fill="url(#jg1)" stroke="#b08c48" stroke-width="1.1"/><path d="M7.2 0.6 V4 H10.6z" fill="#f1dfae" stroke="#b08c48" stroke-width=".8"/><path d="M6.4 3.2 V8 Q6.4 10.5 3.9 10.4 L2.5 10.1" stroke="#2c5590" stroke-width="2.3" fill="none"/></svg>
<span class="t" style="left:107px;top:456.5px;transform:scaleX(1.0866);transform-origin:0 50%;">out.java</span>
<svg class="i" style="left:89px;top:482.3px" width="12" height="15" viewBox="0 0 12 15"><defs><linearGradient id="jg1" x1="0" y1="0" x2="0" y2="1"><stop offset="0.3" stop-color="#ffffff"/><stop offset="1" stop-color="#dfe8f4"/></linearGradient></defs><path d="M0.6 0.6 H7.2 L10.6 4 V14 H0.6z" fill="url(#jg1)" stroke="#b08c48" stroke-width="1.1"/><path d="M7.2 0.6 V4 H10.6z" fill="#f1dfae" stroke="#b08c48" stroke-width=".8"/><path d="M6.4 3.2 V8 Q6.4 10.5 3.9 10.4 L2.5 10.1" stroke="#2c5590" stroke-width="2.3" fill="none"/></svg>
<span class="t" style="left:107px;top:479.5px;transform:scaleX(1.0750);transform-origin:0 50%;">package-info.java</span>
<svg class="i" style="left:89px;top:505.3px" width="12" height="15" viewBox="0 0 12 15"><defs><linearGradient id="jg1" x1="0" y1="0" x2="0" y2="1"><stop offset="0.3" stop-color="#ffffff"/><stop offset="1" stop-color="#dfe8f4"/></linearGradient></defs><path d="M0.6 0.6 H7.2 L10.6 4 V14 H0.6z" fill="url(#jg1)" stroke="#b08c48" stroke-width="1.1"/><path d="M7.2 0.6 V4 H10.6z" fill="#f1dfae" stroke="#b08c48" stroke-width=".8"/><path d="M6.4 3.2 V8 Q6.4 10.5 3.9 10.4 L2.5 10.1" stroke="#2c5590" stroke-width="2.3" fill="none"/></svg>
<span class="t" style="left:107px;top:502.5px;transform:scaleX(1.0556);transform-origin:0 50%;">shijianchuli.java</span>
<svg class="i" style="left:89px;top:528.3px" width="12" height="15" viewBox="0 0 12 15"><defs><linearGradient id="jg1" x1="0" y1="0" x2="0" y2="1"><stop offset="0.3" stop-color="#ffffff"/><stop offset="1" stop-color="#dfe8f4"/></linearGradient></defs><path d="M0.6 0.6 H7.2 L10.6 4 V14 H0.6z" fill="url(#jg1)" stroke="#b08c48" stroke-width="1.1"/><path d="M7.2 0.6 V4 H10.6z" fill="#f1dfae" stroke="#b08c48" stroke-width=".8"/><path d="M6.4 3.2 V8 Q6.4 10.5 3.9 10.4 L2.5 10.1" stroke="#2c5590" stroke-width="2.3" fill="none"/></svg>
<span class="t" style="left:107px;top:525.5px;transform:scaleX(1.0889);transform-origin:0 50%;">Testlgj.java</span>
<svg class="i" style="left:89px;top:551.3px" width="12" height="15" viewBox="0 0 12 15"><defs><linearGradient id="jg1" x1="0" y1="0" x2="0" y2="1"><stop offset="0.3" stop-color="#ffffff"/><stop offset="1" stop-color="#dfe8f4"/></linearGradient></defs><path d="M0.6 0.6 H7.2 L10.6 4 V14 H0.6z" fill="url(#jg1)" stroke="#b08c48" stroke-width="1.1"/><path d="M7.2 0.6 V4 H10.6z" fill="#f1dfae" stroke="#b08c48" stroke-width=".8"/><path d="M6.4 3.2 V8 Q6.4 10.5 3.9 10.4 L2.5 10.1" stroke="#2c5590" stroke-width="2.3" fill="none"/></svg>
<span class="t" style="left:107px;top:548.5px;transform:scaleX(1.0534);transform-origin:0 50%;">Testyuanzhu.java</span>
<svg class="i" style="left:89px;top:574.3px" width="12" height="15" viewBox="0 0 12 15"><defs><linearGradient id="jg1" x1="0" y1="0" x2="0" y2="1"><stop offset="0.3" stop-color="#ffffff"/><stop offset="1" stop-color="#dfe8f4"/></linearGradient></defs><path d="M0.6 0.6 H7.2 L10.6 4 V14 H0.6z" fill="url(#jg1)" stroke="#b08c48" stroke-width="1.1"/><path d="M7.2 0.6 V4 H10.6z" fill="#f1dfae" stroke="#b08c48" stroke-width=".8"/><path d="M6.4 3.2 V8 Q6.4 10.5 3.9 10.4 L2.5 10.1" stroke="#2c5590" stroke-width="2.3" fill="none"/></svg>
<span class="t" style="left:107px;top:571.5px;transform:scaleX(1.0534);transform-origin:0 50%;">Testyunsuan.java</span>
<svg class="i" style="left:89px;top:597.3px" width="12" height="15" viewBox="0 0 12 15"><defs><linearGradient id="jg1" x1="0" y1="0" x2="0" y2="1"><stop offset="0.3" stop-color="#ffffff"/><stop offset="1" stop-color="#dfe8f4"/></linearGradient></defs><path d="M0.6 0.6 H7.2 L10.6 4 V14 H0.6z" fill="url(#jg1)" stroke="#b08c48" stroke-width="1.1"/><path d="M7.2 0.6 V4 H10.6z" fill="#f1dfae" stroke="#b08c48" stroke-width=".8"/><path d="M6.4 3.2 V8 Q6.4 10.5 3.9 10.4 L2.5 10.1" stroke="#2c5590" stroke-width="2.3" fill="none"/></svg>
<span class="t" style="left:107px;top:594.5px;transform:scaleX(1.0282);transform-origin:0 50%;">yuanzhu.java</span>
<svg class="i" style="left:89px;top:620.3px" width="12" height="15" viewBox="0 0 12 15"><defs><linearGradient id="jg1" x1="0" y1="0" x2="0" y2="1"><stop offset="0.3" stop-color="#ffffff"/><stop offset="1" stop-color="#dfe8f4"/></linearGradient></defs><path d="M0.6 0.6 H7.2 L10.6 4 V14 H0.6z" fill="url(#jg1)" stroke="#b08c48" stroke-width="1.1"/><path d="M7.2 0.6 V4 H10.6z" fill="#f1dfae" stroke="#b08c48" stroke-width=".8"/><path d="M6.4 3.2 V8 Q6.4 10.5 3.9 10.4 L2.5 10.1" stroke="#2c5590" stroke-width="2.3" fill="none"/></svg>
<span class="t" style="left:107px;top:617.5px;transform:scaleX(1.0282);transform-origin:0 50%;">yunsuan.java</span>
<svg class="i" style="left:89px;top:643.3px" width="12" height="15" viewBox="0 0 12 15"><defs><linearGradient id="jg1" x1="0" y1="0" x2="0" y2="1"><stop offset="0.3" stop-color="#ffffff"/><stop offset="1" stop-color="#dfe8f4"/></linearGradient></defs><path d="M0.6 0.6 H7.2 L10.6 4 V14 H0.6z" fill="url(#jg1)" stroke="#b08c48" stroke-width="1.1"/><path d="M7.2 0.6 V4 H10.6z" fill="#f1dfae" stroke="#b08c48" stroke-width=".8"/><path d="M6.4 3.2 V8 Q6.4 10.5 3.9 10.4 L2.5 10.1" stroke="#2c5590" stroke-width="2.3" fill="none"/></svg>
<span class="t" style="left:107px;top:640.5px;transform:scaleX(1.0280);transform-origin:0 50%;">zhuanhuan.java</span>
<svg class="i" style="left:53.5px;top:669px" width="6" height="9" viewBox="0 0 6 9"><path d="M1.2 1 L4.5 4.5 L1.2 8" stroke="#9a9a9a" stroke-width="1.5" fill="none"/></svg>
<svg class="i" style="left:68.3px;top:667.7px" width="16" height="12" viewBox="0 0 16 12"><defs><linearGradient id="fg" x1="0" y1="0" x2="0" y2="1"><stop offset="0" stop-color="#fbe3ae"/><stop offset="1" stop-color="#f3c878"/></linearGradient></defs><path d="M0.6 10.2 V1.6 Q0.6 0.8 1.4 0.8 H4.2 L5.4 2.2 H11 Q11.8 2.2 11.8 3 V4.6" fill="#fdf4da" stroke="#b9782a" stroke-width="1"/><path d="M0.7 10.6 L3.4 4.6 H15 L12.2 10.6z" fill="url(#fg)" stroke="#b9782a" stroke-width="1" stroke-linejoin="round"/></svg>
<span class="t" style="left:88px;top:663.5px;transform:scaleX(1.2121);transform-origin:0 50%;">lgj</span>
<svg class="i" style="left:53.5px;top:692px" width="6" height="9" viewBox="0 0 6 9"><path d="M1.2 1 L4.5 4.5 L1.2 8" stroke="#9a9a9a" stroke-width="1.5" fill="none"/></svg>
<svg class="i" style="left:68.3px;top:690.7px" width="16" height="12" viewBox="0 0 16 12"><defs><linearGradient id="fg" x1="0" y1="0" x2="0" y2="1"><stop offset="0" stop-color="#fbe3ae"/><stop offset="1" stop-color="#f3c878"/></linearGradient></defs><path d="M0.6 10.2 V1.6 Q0.6 0.8 1.4 0.8 H4.2 L5.4 2.2 H11 Q11.8 2.2 11.8 3 V4.6" fill="#fdf4da" stroke="#b9782a" stroke-width="1"/><path d="M0.7 10.6 L3.4 4.6 H15 L12.2 10.6z" fill="url(#fg)" stroke="#b9782a" stroke-width="1" stroke-linejoin="round"/></svg>
<span class="t" style="left:88px;top:686.5px;transform:scaleX(1.1324);transform-origin:0 50%;">lgj66</span>
<svg class="i" style="left:51px;top:712.3px" width="12" height="15" viewBox="0 0 12 15"><path d="M0.6 0.6 H7.2 L10.6 4 V13.7 H0.6z" fill="#e9edf8" stroke="#98a0c0" stroke-width="1.1"/><path d="M7.2 0.6 V4 H10.6z" fill="#f8eab8" stroke="#c0a868" stroke-width=".8"/><path d="M3 5.4 L8 11.6 M8 5.4 L3 11.6" stroke="#26367e" stroke-width="1.6"/></svg>
<span class="t" style="left:69px;top:709.5px;transform:scaleX(1.0482);transform-origin:0 50%;">.classpath</span>
<svg class="i" style="left:51px;top:735.3px" width="12" height="15" viewBox="0 0 12 15"><path d="M0.6 0.6 H7.2 L10.6 4 V13.7 H0.6z" fill="#e9edf8" stroke="#98a0c0" stroke-width="1.1"/><path d="M7.2 0.6 V4 H10.6z" fill="#f8eab8" stroke="#c0a868" stroke-width=".8"/><path d="M3 5.4 L8 11.6 M8 5.4 L3 11.6" stroke="#26367e" stroke-width="1.6"/></svg>
<span class="t" style="left:69px;top:732.5px;transform:scaleX(1.1625);transform-origin:0 50%;">.project</span>
<div style="left:265px;top:102px;width:1361px;height:694px;background:#fff;border-radius:7px 7px 5px 5px;border:1px solid #c3c7cf"></div>
<div style="left:266px;top:103px;width:1359px;height:29px;background:linear-gradient(#d9e6f3,#cfdfee 50%,#d2e1f0);border-radius:6px 6px 0 0;border-bottom:1px solid #a9b9ce"></div>
<svg class="i" style="left:1609px;top:91.5px" width="7" height="4" viewBox="0 0 7 4"><rect x="0.5" y="0.5" width="6" height="2.4" fill="#fff" stroke="#8c8c8c" stroke-width="1"/></svg>
<svg class="i" style="left:1619px;top:92px" width="7" height="7" viewBox="0 0 7 7"><rect x="0.5" y="0.5" width="6" height="6" fill="#fff" stroke="#8c8c8c" stroke-width="1"/><path d="M0.5 2.7h6" stroke="#8c8c8c" stroke-width="1"/></svg>
<div style="left:1626px;top:102px;width:2px;height:901px;background:#fff"></div>
<svg class="i" style="left:272.5px;top:110.5px" width="12" height="15" viewBox="0 0 12 15"><defs><linearGradient id="jg2" x1="0" y1="0" x2="0" y2="1"><stop offset="0.3" stop-color="#ffffff"/><stop offset="1" stop-color="#dfe8f4"/></linearGradient></defs><path d="M0.6 0.6 H7.2 L10.6 4 V14 H0.6z" fill="url(#jg2)" stroke="#b08c48" stroke-width="1.1"/><path d="M7.2 0.6 V4 H10.6z" fill="#f1dfae" stroke="#b08c48" stroke-width=".8"/><path d="M6.4 3.2 V8 Q6.4 10.5 3.9 10.4 L2.5 10.1" stroke="#2c5590" stroke-width="2.3" fill="none"/></svg>
<span class="t" style="left:290px;top:108.5px;transform:scaleX(1.0598);transform-origin:0 50%;">clock.java</span>
<div style="left:386px;top:102px;width:97px;height:30px;background:#fff;border-radius:9px 9px 0 0;border:1px solid #c2cfdf;border-bottom:none"></div>
<svg class="i" style="left:392.5px;top:110.5px" width="12" height="15" viewBox="0 0 12 15"><defs><linearGradient id="jg2" x1="0" y1="0" x2="0" y2="1"><stop offset="0.3" stop-color="#ffffff"/><stop offset="1" stop-color="#dfe8f4"/></linearGradient></defs><path d="M0.6 0.6 H7.2 L10.6 4 V14 H0.6z" fill="url(#jg2)" stroke="#b08c48" stroke-width="1.1"/><path d="M7.2 0.6 V4 H10.6z" fill="#f1dfae" stroke="#b08c48" stroke-width=".8"/><path d="M6.4 3.2 V8 Q6.4 10.5 3.9 10.4 L2.5 10.1" stroke="#2c5590" stroke-width="2.3" fill="none"/></svg>
<span class="t" style="left:409px;top:108.5px;transform:scaleX(1.0701);transform-origin:0 50%;">io.java</span>
<svg class="i" style="left:463px;top:112px" width="12" height="12" viewBox="0 0 12 12"><path d="M1 2.9 L2.9 1 L6 4.1 L9.1 1 L11 2.9 L7.9 6 L11 9.1 L9.1 11 L6 7.9 L2.9 11 L1 9.1 L4.1 6z" fill="#fff" stroke="#5c5c5c" stroke-width="1" stroke-linejoin="miter"/></svg>
<svg class="i" style="left:488.5px;top:110.5px" width="12" height="15" viewBox="0 0 12 15"><defs><linearGradient id="jg2" x1="0" y1="0" x2="0" y2="1"><stop offset="0.3" stop-color="#ffffff"/><stop offset="1" stop-color="#dfe8f4"/></linearGradient></defs><path d="M0.6 0.6 H7.2 L10.6 4 V14 H0.6z" fill="url(#jg2)" stroke="#b08c48" stroke-width="1.1"/><path d="M7.2 0.6 V4 H10.6z" fill="#f1dfae" stroke="#b08c48" stroke-width=".8"/><path d="M6.4 3.2 V8 Q6.4 10.5 3.9 10.4 L2.5 10.1" stroke="#2c5590" stroke-width="2.3" fill="none"/></svg>
<span class="t" style="left:506px;top:108.5px;transform:scaleX(1.0847);transform-origin:0 50%;">out.java</span>
<div style="left:268px;top:134px;width:12px;height:639px;background:#f6f6f6"></div>
<svg class="i" style="left:268px;top:174px" width="12" height="320"><defs><pattern id="chk" width="2" height="2" patternUnits="userSpaceOnUse"><rect width="2" height="2" fill="#dcebfa"/><rect width="1" height="1" fill="#1f7ad8"/><rect x="1" y="1" width="1" height="1" fill="#1f7ad8"/></pattern></defs><rect width="12" height="320" fill="url(#chk)"/></svg>
<div style="left:307px;top:132px;width:1px;height:641px;background:#efefef"></div>
<div style="left:310px;top:174px;width:1279px;height:20px;background:#e8f2fe"></div>
<div style="left:427px;top:174px;width:18px;height:20px;background:#d4d4d4"></div>
<pre class="ln" style="left:258px;top:136.7px">1</pre>
<pre style="left:310px;top:136.7px"><b>package</b> demo;</pre>
<pre class="ln" style="left:258px;top:156.7px">2</pre>
<pre style="left:310px;top:156.7px"><b>import</b> java.io.*;</pre>
<pre class="ln" style="left:258px;top:176.7px">3</pre>
<pre style="left:310px;top:176.7px"><b>public</b> <b>class</b> io {</pre>
<pre class="ln" style="left:258px;top:196.7px">4</pre>
<pre style="left:310px;top:196.7px">    <span class="c">/**</span></pre>
<pre class="ln" style="left:258px;top:216.7px">5</pre>
<pre style="left:310px;top:216.7px">    <span class="c"> * </span><span class="ct">@param</span><span class="c"> args</span></pre>
<pre class="ln" style="left:258px;top:236.7px">6</pre>
<pre style="left:310px;top:236.7px">    <span class="c"> */</span></pre>
<pre class="ln" style="left:258px;top:256.7px">7</pre>
<pre style="left:310px;top:256.7px">    <b>public</b> <b>static</b> <b>void</b> main(String[] <span class="v">args</span>)<b>throws</b> IOException {</pre>
<pre class="ln" style="left:258px;top:276.7px">8</pre>
<pre style="left:310px;top:276.7px">        <span class="cm">// </span><span class="ct">TODO</span><span class="cm"> Auto-generated method stub</span></pre>
<pre class="ln" style="left:258px;top:296.7px">9</pre>
<pre style="left:310px;top:296.7px">   String <span class="v">str</span>=<span class="s">"12345abcdef@#%&amp;*<span class="zh">软件工程</span>"</span>;</pre>
<pre class="ln" style="left:258px;top:316.7px">10</pre>
<pre style="left:310px;top:316.7px">   File <span class="v">file</span>=<b>new</b> File(<span class="s">"data.txt"</span>);</pre>
<pre class="ln" style="left:258px;top:336.7px">11</pre>
<pre style="left:310px;top:336.7px">   FileWriter <span class="v">fw</span> = <b>new</b> FileWriter(<span class="v">file</span>);</pre>
<pre class="ln" style="left:258px;top:356.7px">12</pre>
<pre style="left:310px;top:356.7px">   BufferedWriter <span class="v">bw</span>=<b>new</b> BufferedWriter(<span class="v">fw</span>);</pre>
<pre class="ln" style="left:258px;top:376.7px">13</pre>
<pre style="left:310px;top:376.7px">   <span class="v">bw</span>.write(<span class="v">str</span>);</pre>
<pre class="ln" style="left:258px;top:396.7px">14</pre>
<pre style="left:310px;top:396.7px">   <span class="v">bw</span>.close();</pre>
<pre class="ln" style="left:258px;top:416.7px">15</pre>
<pre style="left:310px;top:416.7px">   <span class="v">fw</span>.close();</pre>
<pre class="ln" style="left:258px;top:436.7px">16</pre>
<pre style="left:310px;top:436.7px">    }</pre>
<pre class="ln" style="left:258px;top:456.7px">17</pre>
<pre class="ln" style="left:258px;top:476.7px">18</pre>
<pre style="left:310px;top:476.7px">}</pre>
<pre class="ln" style="left:258px;top:496.7px">19</pre>
<svg class="i" style="left:298px;top:199px" width="9" height="9" viewBox="0 0 9 9"><circle cx="4.5" cy="4.5" r="4.3" fill="#d5e0ea"/><path d="M2.2 4.5h4.6" stroke="#8595a6" stroke-width="1.1"/></svg>
<svg class="i" style="left:298px;top:259px" width="9" height="9" viewBox="0 0 9 9"><circle cx="4.5" cy="4.5" r="4.3" fill="#d5e0ea"/><path d="M2.2 4.5h4.6" stroke="#8595a6" stroke-width="1.1"/></svg>
<svg class="i" style="left:267.5px;top:277px" width="12" height="14" viewBox="0 0 12 14"><rect x="1.5" y="2.5" width="9.5" height="10.5" fill="#faf0d8" stroke="#c8a868" stroke-width="1"/><rect x="3.5" y="0.8" width="5" height="3" fill="#a8b0c8" stroke="#8088a8" stroke-width=".6"/><path d="M5 6.5h5 M5 8.5h5 M5 10.5h5" stroke="#8090b0" stroke-width=".9"/><path d="M0 11.5 L2.5 8.5 L4 10z" fill="#2f5fd8"/><path d="M0.5 11 L5 6" stroke="#2f5fd8" stroke-width="1.6"/></svg>
<div style="left:1590px;top:133px;width:20px;height:640px;background:#f0f0f0"></div>
<svg class="i" style="left:1594.5px;top:141px" width="10" height="7" viewBox="0 0 10 7"><path d="M0.7 6 L5 1.5 L9.3 6" stroke="#ababab" stroke-width="1.9" fill="none"/></svg>
<svg class="i" style="left:1594.5px;top:758px" width="10" height="7" viewBox="0 0 10 7"><path d="M0.7 1 L5 5.5 L9.3 1" stroke="#ababab" stroke-width="1.9" fill="none"/></svg>
<div style="left:308px;top:773px;width:1302px;height:20px;background:#f0f0f0"></div>
<svg class="i" style="left:314.5px;top:778px" width="7" height="10" viewBox="0 0 7 10"><path d="M6 0.7 L1.5 5 L6 9.3" stroke="#ababab" stroke-width="1.9" fill="none"/></svg>
<svg class="i" style="left:1574.5px;top:778px" width="7" height="10" viewBox="0 0 7 10"><path d="M1 0.7 L5.5 5 L1 9.3" stroke="#ababab" stroke-width="1.9" fill="none"/></svg>
<div style="left:1610px;top:133px;width:14px;height:660px;background:#f8f8f8"></div>
<div style="left:1612px;top:182px;width:9px;height:5px;background:#fff;border:1px solid #d8d8d8"></div>
<div style="left:1612px;top:282px;width:9px;height:5px;background:#b8dcff;border:1px solid #4a9be8"></div>
<div style="left:2px;top:795px;width:2px;height:6px;background:#fff"></div>
<div style="left:2px;top:800px;width:1626px;height:203px;background:#fff;border-radius:3px 8px 0 0"></div>
<div style="left:3px;top:800px;width:1624px;height:30px;background:#f5f6fc;border-radius:8px 8px 0 0"></div>
<div style="left:3px;top:800px;width:96px;height:30px;background:linear-gradient(#d3deec,#e4ebf5 45%,#fff);border-radius:8px 8px 0 0"></div>
<svg class="i" style="left:9.5px;top:809px" width="16" height="14" viewBox="0 0 16 14"><rect x="1.2" y="0.9" width="12.6" height="9.2" rx="1.3" fill="#fff" stroke="#2a57a8" stroke-width="1.8"/><rect x="3.6" y="3.4" width="5" height="1.2" fill="#2f5fb0"/><rect x="3.6" y="5.8" width="7" height="1.2" fill="#2f5fb0"/><rect x="5.3" y="10.6" width="4.6" height="1.4" fill="#3666b8"/><rect x="3" y="12" width="9.2" height="1.5" fill="#3666b8"/></svg>
<span class="t" style="left:28px;top:807.5px;">控制台</span>
<svg class="i" style="left:80px;top:810px" width="12" height="12" viewBox="0 0 12 12"><path d="M1 2.9 L2.9 1 L6 4.1 L9.1 1 L11 2.9 L7.9 6 L11 9.1 L9.1 11 L6 7.9 L2.9 11 L1 9.1 L4.1 6z" fill="#fff" stroke="#5c5c5c" stroke-width="1" stroke-linejoin="miter"/></svg>
<svg class="i" style="left:103px;top:808.5px" width="16" height="16" viewBox="0 0 16 16"><path d="M1.5 1.5 H8.5 L11 4 V13.5 H1.5z" fill="#fdfaf0" stroke="#d8cba8" stroke-width="1"/><path d="M4.2 4.5 Q3 4.5 3.3 6.2 Q3.5 7.5 2.6 7.8 Q3.5 8.1 3.3 9.4 Q3 11 4.2 11 M6.8 4.5 Q8 4.5 7.7 6.2 Q7.5 7.5 8.4 7.8 Q7.5 8.1 7.7 9.4 Q8 11 6.8 11" stroke="#9ab4dc" stroke-width=".9" fill="none"/><path d="M5 7.8h1.2" stroke="#9ab4dc" stroke-width=".9"/><path d="M7.5 10.5 H11 V8.5 L15 11.8 L11 15 V13 H7.5z" fill="#fbe6b8" stroke="#e2bd78" stroke-width=".9"/></svg>
<span class="g" style="left:122px;top:807.5px;">声明</span>
<svg class="i" style="left:183px;top:812px" width="16" height="12" viewBox="0 0 16 12"><rect x="0.6" y="1" width="12" height="5" fill="#a6d8a8" stroke="#86c48a" stroke-width=".9"/><rect x="8" y="2" width="4" height="3" fill="#fff"/><circle cx="11.2" cy="8" r="3.6" fill="#5cb860" stroke="#46a24c" stroke-width=".6"/><path d="M10 6 L13.2 8 L10 10z" fill="#fff"/></svg>
<span class="g" style="left:201px;top:807.5px;">进度</span>
<svg class="i" style="left:260px;top:808.5px" width="18" height="16" viewBox="0 0 18 16"><path d="M1 15 L5 9 L9 13z" fill="#fffbe0" stroke="#f2e2a8" stroke-width=".6"/><path d="M4.5 9.5 L7.5 6 L12 10 L8.5 13.5z" fill="#c4c0bc" stroke="#aeaaa6" stroke-width=".7"/><path d="M7.5 6 L13 1 L16.5 2.5 L16.5 5.5 L12 10z" fill="#f8d6a0" stroke="#dcb684" stroke-width=".9"/><circle cx="13.3" cy="4" r=".9" fill="#90a8d8"/></svg>
<span class="g" style="left:280px;top:807.5px;">搜索</span>
<div style="left:1457px;top:802px;width:23px;height:21px;background:#cce4f7;border:1px solid #99d1ff"></div>
<div style="left:1480px;top:802px;width:23px;height:21px;background:#cce4f7;border:1px solid #99d1ff"></div>
<svg class="i" style="left:1316.5px;top:806.5px" width="12" height="12" viewBox="0 0 12 12"><rect x="1.5" y="1.5" width="9" height="9" rx="1" fill="#b8b8b8" stroke="#9c9c9c" stroke-width="1"/><rect x="3.2" y="3.2" width="5.6" height="5.6" fill="#a4a4a4"/></svg>
<svg class="i" style="left:1338.5px;top:806.5px" width="14" height="12" viewBox="0 0 14 12"><path d="M1 2.6 L3.4 0.6 L7 3.9 L10.6 0.6 L13 2.6 L9.4 6 L13 9.4 L10.6 11.4 L7 8.1 L3.4 11.4 L1 9.4 L4.6 6z" fill="#585858" stroke="#4a4a4a" stroke-width=".6"/></svg>
<svg class="i" style="left:1360px;top:804.5px" width="16" height="16" viewBox="0 0 16 16"><g transform="translate(0,0) scale(.72)"><path d="M1 2.6 L3.4 0.6 L7 3.9 L10.6 0.6 L13 2.6 L9.4 6 L13 9.4 L10.6 11.4 L7 8.1 L3.4 11.4 L1 9.4 L4.6 6z" fill="#e8e8e8" stroke="#5a5a5a" stroke-width="1.1"/></g><g transform="translate(4.2,4.6) scale(.84)"><path d="M1 2.6 L3.4 0.6 L7 3.9 L10.6 0.6 L13 2.6 L9.4 6 L13 9.4 L10.6 11.4 L7 8.1 L3.4 11.4 L1 9.4 L4.6 6z" fill="#585858" stroke="#4a4a4a" stroke-width=".6"/></g></svg>
<svg class="i" style="left:1391px;top:804.5px" width="16" height="16" viewBox="0 0 16 16"><path d="M1.5 1.5 H8 L10.5 4 V13.5 H1.5z" fill="#f4f4f4" stroke="#c4c4c4" stroke-width="1"/><path d="M3 4.5h4 M3 6.5h6 M3 8.5h6 M3 10.5h4" stroke="#bcbcbc" stroke-width="1"/><path d="M9 9.5 L14.5 15 M14.5 9.5 L9 15" stroke="#b4b4b4" stroke-width="1.8"/></svg>
<svg class="i" style="left:1414px;top:804.5px" width="16" height="16" viewBox="0 0 16 16"><path d="M6 1.5 H14.5 V14.5 H6z" fill="#fdfbf2" stroke="#9a9068" stroke-width="1"/><path d="M12 3 V13" stroke="#3b6cb8" stroke-width="1.4" stroke-dasharray="2.5 1.2"/><path d="M8 4h2.5 M8 6h2.5" stroke="#9ab0d0" stroke-width="1"/><rect x="1" y="9" width="7.5" height="6" rx=".8" fill="#f2c14a" stroke="#b8860b" stroke-width="1"/><path d="M2.8 9 V7 Q2.8 4.8 4.8 4.8 Q6.8 4.8 6.8 7 V9" stroke="#b8860b" stroke-width="1.3" fill="none"/></svg>
<svg class="i" style="left:1437.5px;top:804.5px" width="16" height="16" viewBox="0 0 16 16"><path d="M1.5 1.5 H9 L11.5 4 V12.5 H1.5z" fill="#fdfbf2" stroke="#cfc4a4" stroke-width="1"/><path d="M3 4.5h5 M3 6.5h6 M3 8.5h4 M3 10.5h5" stroke="#8aa8d8" stroke-width="1"/><path d="M13.5 3 V9 H8.5 V7 L5 10 L8.5 13 V11 H15.5 V3z" fill="#fbe6ac" stroke="#deb468" stroke-width=".9"/></svg>
<svg class="i" style="left:1459.5px;top:804.5px" width="18" height="16" viewBox="0 0 18 16"><rect x="5.5" y="1.5" width="11" height="8" fill="#fff" stroke="#5a78b0" stroke-width="1"/><path d="M7.5 4h7 M7.5 6.5h5" stroke="#5a78b0" stroke-width="1"/><rect x="1.5" y="6.5" width="8" height="6" fill="#e8eef8" stroke="#44608f" stroke-width="1"/><rect x="3.5" y="13" width="4" height="1.2" fill="#44608f"/><rect x="2.3" y="14.2" width="6.4" height="1.2" fill="#44608f"/></svg>
<svg class="i" style="left:1482.5px;top:804.5px" width="18" height="16" viewBox="0 0 18 16"><rect x="5.5" y="1.5" width="11" height="8" fill="#fff" stroke="#5a78b0" stroke-width="1"/><path d="M8 3.5 L11 6.8 M11 3.5 L8 6.8" stroke="#d82020" stroke-width="1.5"/><path d="M12.5 4h2.5 M12.5 6.5h2.5" stroke="#5a78b0" stroke-width="1"/><rect x="1.5" y="6.5" width="8" height="6" fill="#e8eef8" stroke="#44608f" stroke-width="1"/><rect x="3.5" y="13" width="4" height="1.2" fill="#44608f"/><rect x="2.3" y="14.2" width="6.4" height="1.2" fill="#44608f"/></svg>
<svg class="i" style="left:1513.5px;top:804.5px" width="18" height="16" viewBox="0 0 18 16"><rect x="1.5" y="6.5" width="11.5" height="8" fill="#fff" stroke="#7f8fb0" stroke-width="1"/><rect x="2" y="7" width="10.5" height="2.3" fill="#3f74c8"/><path d="M8.6 10.4 L11.4 7.6" stroke="#555" stroke-width="1"/><path d="M10.8 3.8 L14.8 7.8 M11.8 6.8 L14.4 2.2 L16.6 4.4z" stroke="#1f7a2e" stroke-width="1.4" fill="#3fae4f"/><circle cx="14.6" cy="3.6" r="2.1" fill="#3fae4f" stroke="#1f7a2e" stroke-width=".7"/></svg>
<svg class="i" style="left:1538px;top:804.5px" width="16" height="16" viewBox="0 0 16 16"><rect x="1.5" y="1.5" width="12" height="9" rx="1" fill="#f4f4f4" stroke="#8a8a8a" stroke-width="1.2"/><rect x="3.5" y="3.5" width="8" height="5" fill="#d8d8d8"/><path d="M4.5 5h4 M4.5 7h6" stroke="#8a8a8a" stroke-width=".9"/><rect x="5.5" y="11" width="4" height="1.6" fill="#8a8a8a"/><rect x="3.5" y="12.6" width="8" height="1.5" fill="#8a8a8a"/></svg>
<svg class="i" style="left:1561px;top:810px" width="10" height="5" viewBox="0 0 10 5"><path d="M0 0h10L5 5.4z" fill="#7a7a7a"/></svg>
<svg class="i" style="left:1580px;top:804.5px" width="16" height="16" viewBox="0 0 16 16"><rect x="1.5" y="3.5" width="12" height="10.5" fill="#fdfcf4" stroke="#8a8064"/><rect x="2" y="4" width="11" height="2.2" fill="#4a90d9"/><path d="M7 13.5 Q12 12.5 13 8.5" stroke="#f1d88a" fill="none" stroke-width="1.4"/><path d="M12.4 -0.10000000000000009 L13.700000000000001 2.5 L16.3 3.8 L13.700000000000001 5.1 L12.4 7.699999999999999 L11.1 5.1 L8.5 3.8 L11.1 2.5z" fill="#fffdf2" stroke="#b8901f" stroke-width="1"/></svg>
<svg class="i" style="left:1603px;top:810px" width="10" height="5" viewBox="0 0 10 5"><path d="M0 0h10L5 5.4z" fill="#000"/></svg>
<div style="left:1382px;top:804px;width:1px;height:18px;background:#8e8e8e"></div>
<div style="left:1505px;top:804px;width:1px;height:18px;background:#8e8e8e"></div>
<span class="t" style="left:8.6px;top:833px;letter-spacing:0.400px;">&lt;已终止&gt; io [Java 应用程序] C:\Program Files\Java\jre1.8.0_131\bin\javaw.exe（2019年7月8日 下午4:09:55）</span>
<div style="left:7px;top:852px;width:1616px;height:1px;background:#8f8f8f"></div>
<div style="left:1603px;top:853px;width:20px;height:125px;background:#f0f0f0"></div>
<svg class="i" style="left:1608px;top:861.5px" width="10" height="7" viewBox="0 0 10 7"><path d="M0.7 6 L5 1.5 L9.3 6" stroke="#ababab" stroke-width="1.9" fill="none"/></svg>
<svg class="i" style="left:1608px;top:962.5px" width="10" height="7" viewBox="0 0 10 7"><path d="M0.7 1 L5 5.5 L9.3 1" stroke="#ababab" stroke-width="1.9" fill="none"/></svg>
<div style="left:7px;top:978px;width:1616px;height:20px;background:#f0f0f0"></div>
<svg class="i" style="left:12.5px;top:982.5px" width="7" height="10" viewBox="0 0 7 10"><path d="M6 0.7 L1.5 5 L6 9.3" stroke="#ababab" stroke-width="1.9" fill="none"/></svg>
<svg class="i" style="left:1587.5px;top:982.5px" width="7" height="10" viewBox="0 0 7 10"><path d="M1 0.7 L5.5 5 L1 9.3" stroke="#ababab" stroke-width="1.9" fill="none"/></svg>
<div style="left:1633px;top:90px;width:286px;height:914px;background:#fff;border-radius:8px 7px 6px 5px"></div>
<div style="left:1633px;top:90px;width:286px;height:30px;background:#f5f6fc;border-radius:8px 7px 0 0"></div>
<div style="left:1633px;top:90px;width:79px;height:30px;background:linear-gradient(#d3deec,#e4ebf5 45%,#fff);border-radius:8px 8px 0 0"></div>
<svg class="i" style="left:1639px;top:99px" width="14" height="16" viewBox="0 0 14 16"><defs><linearGradient id="og" x1="0" y1="0" x2="0" y2="1"><stop offset="0" stop-color="#fff"/><stop offset="1" stop-color="#9cc4f0"/></linearGradient></defs><rect x="0.5" y="0.5" width="5" height="5" fill="url(#og)" stroke="#1c64b4" stroke-width="1"/><rect x="0.5" y="9.5" width="5" height="5" fill="url(#og)" stroke="#1c64b4" stroke-width="1"/><path d="M7.5 3.5h5.5 M10.5 8h2.5 M7.5 12.5h5.5" stroke="#1c64b4" stroke-width="1"/><rect x="7.5" y="6.7" width="2" height="2" fill="#fff" stroke="#1c64b4" stroke-width=".9"/></svg>
<span class="t" style="left:1657px;top:96.5px;">大纲</span>
<svg class="i" style="left:1694px;top:100.5px" width="12" height="12" viewBox="0 0 12 12"><path d="M1 2.9 L2.9 1 L6 4.1 L9.1 1 L11 2.9 L7.9 6 L11 9.1 L9.1 11 L6 7.9 L2.9 11 L1 9.1 L4.1 6z" fill="#fff" stroke="#5c5c5c" stroke-width="1" stroke-linejoin="miter"/></svg>
<svg class="i" style="left:1718px;top:98.5px" width="14" height="15" viewBox="0 0 14 15"><path d="M1.5 13.5 V1.5 H11.5 V6" fill="#f4f7fb" stroke="#b4c2d8" stroke-width="1"/><path d="M2.8 2.8 L7 7 M2.8 2.8 V5.4 M2.8 2.8 H5.4" stroke="#8a98b4" stroke-width="1.1" fill="none"/><rect x="2.5" y="7.5" width="10.5" height="6.5" fill="#fafcff" stroke="#b4c2d8" stroke-width="1"/><path d="M4.5 9.8h6.5" stroke="#f08a8a" stroke-width="1.1"/><path d="M4.5 12h6.5" stroke="#8acc98" stroke-width="1.1"/></svg>
<span class="g" style="left:1736px;top:96.5px;">模板</span>
<svg class="i" style="left:1775.5px;top:97.5px" width="16" height="16" viewBox="0 0 16 16"><rect x="4.5" y="3.5" width="10.5" height="11.5" rx="1.2" fill="#faf5ea" stroke="#dccdb0" stroke-width="1.4"/><path d="M7 4 L8 1.2 H11.5 L12.5 4z" fill="#c8cede" stroke="#aab2c8" stroke-width=".7"/><path d="M8.5 7.5h4.5 M9.5 10h3.5 M8.5 12.3h4.5" stroke="#b4bed4" stroke-width="1"/><path d="M0.8 9 L3.8 12 L8.6 6.2" stroke="#8cb8ec" stroke-width="1.8" fill="none"/></svg>
<span class="g" style="left:1795px;top:96.5px;">任务</span>
<svg class="i" style="left:1870.5px;top:97.5px" width="12" height="6" viewBox="0 0 12 6"><rect x="0.6" y="0.6" width="10" height="3" fill="#fff" stroke="#555" stroke-width="1"/></svg>
<svg class="i" style="left:1893.5px;top:98px" width="12" height="11" viewBox="0 0 12 11"><rect x="0.6" y="0.6" width="10" height="9.5" fill="#fff" stroke="#555" stroke-width="1.1"/><path d="M0.6 2.3h10" stroke="#555" stroke-width=".9"/></svg>
<div style="left:1724px;top:122px;width:187px;height:22px;background:#f5f6fc"></div>
<svg class="i" style="left:1726.5px;top:125px" width="16" height="16" viewBox="0 0 16 16"><defs><linearGradient id="gs1" x1="0" y1="0" x2="0" y2="1"><stop offset="0" stop-color="#ececec"/><stop offset=".45" stop-color="#d4d4d4"/><stop offset=".5" stop-color="#bcbcbc"/><stop offset="1" stop-color="#d0d0d0"/></linearGradient><linearGradient id="gs2" x1="0" y1="0" x2="0" y2="1"><stop offset="0" stop-color="#c8c8c8"/><stop offset=".45" stop-color="#b0b0b0"/><stop offset=".5" stop-color="#8e8e8e"/><stop offset="1" stop-color="#a8a8a8"/></linearGradient></defs><circle cx="4.8" cy="4.6" r="3.2" fill="url(#gs1)"/><circle cx="11.6" cy="6.6" r="3.3" fill="url(#gs1)"/><circle cx="6.4" cy="11.2" r="3.6" fill="url(#gs2)"/></svg>
<svg class="i" style="left:1750.5px;top:125px" width="16" height="16" viewBox="0 0 16 16"><defs><linearGradient id="cg" x1="0" y1="0" x2="0" y2="1"><stop offset="0" stop-color="#d4e6f7"/><stop offset="1" stop-color="#ffffff"/></linearGradient></defs><rect x="1.5" y="2" width="10" height="10" fill="#cfe2f5" stroke="#a9bfe0" stroke-width="1"/><rect x="4" y="4.5" width="10" height="10" fill="url(#cg)" stroke="#8a9cc8" stroke-width="1"/><path d="M6 9.6h6.2" stroke="#1f4f8f" stroke-width="1.5"/></svg>
<svg class="i" style="left:1772px;top:124px" width="18" height="18" viewBox="0 0 18 18"><path d="M3.5 2.5 V14 M1.3 11.6 L3.5 14.6 L5.7 11.6z" stroke="#3c5f78" stroke-width="1" fill="#3c5f78"/><text x="5.8" y="8.4" font-family="Liberation Sans, sans-serif" font-size="12" font-weight="bold" fill="#14866a">a</text><text x="10.6" y="16.5" font-family="Liberation Sans, sans-serif" font-size="12" font-weight="bold" fill="#93308f">z</text></svg>
<svg class="i" style="left:1795px;top:124px" width="18" height="18" viewBox="0 0 18 18"><circle cx="9" cy="9.5" r="5.6" fill="#4a9be0" stroke="#2f7ac8" stroke-width=".8"/><path d="M7 6.6 H11.5 M7.7 6.6 V13 M7.7 9.6 H10.8" stroke="#fff" stroke-width="1.6" fill="none"/><path d="M1.5 1.5 L16.5 16.5" stroke="#1f2f8a" stroke-width="1.4"/></svg>
<svg class="i" style="left:1818px;top:124px" width="18" height="18" viewBox="0 0 18 18"><circle cx="7.5" cy="11" r="3.1" fill="#a2a2a2" stroke="#8a8a8a" stroke-width=".6"/><path d="M2 5 L14 16.6" stroke="#1f2f8a" stroke-width="1.3"/><text x="11.6" y="7.8" font-family="Liberation Sans, sans-serif" font-size="8.5" font-weight="bold" fill="#3a6fc0">S</text></svg>
<svg class="i" style="left:1845px;top:128px" width="10" height="10" viewBox="0 0 10 10"><circle cx="5" cy="5" r="3.7" fill="#4fae58" stroke="#2f8a3a" stroke-width=".8"/><path d="M2.6 4.4h4.8" stroke="#9fd8a4" stroke-width="1"/></svg>
<svg class="i" style="left:1864px;top:124px" width="18" height="18" viewBox="0 0 18 18"><circle cx="7.5" cy="11" r="3.1" fill="#a2a2a2" stroke="#8a8a8a" stroke-width=".6"/><path d="M2 5 L14 16.6" stroke="#1f2f8a" stroke-width="1.3"/><path d="M12.8 2.2 V7 H15.8" stroke="#3a6fc0" stroke-width="1.5" fill="none"/></svg>
<svg class="i" style="left:1896.5px;top:127.5px" width="11" height="6" viewBox="0 0 11 6"><path d="M0.7 0.6 H9.9 L5.3 5.2z" fill="#fff" stroke="#666" stroke-width=".9"/></svg>
<svg class="i" style="left:1666px;top:149.1px" width="13" height="13" viewBox="0 0 13 13"><rect x="1.5" y="1.5" width="10" height="10" fill="#dcdcae" stroke="#8e8e62" stroke-width="1"/><path d="M6.5 0.3 V12.7 M0.3 6.5 H12.7" stroke="#6e6e48" stroke-width="1"/></svg>
<span class="t" style="left:1691px;top:144.8px;transform:scaleX(1.1404);transform-origin:0 50%;">demo</span>
<div style="left:1662px;top:167px;width:45px;height:23px;background:#d9d9d9"></div>
<svg class="i" style="left:1646.8px;top:173.6px" width="8" height="12" viewBox="0 0 8 12"><path d="M1.4 1.2 L5.8 5.8 L1.4 10.4" stroke="#a2a2a2" stroke-width="1.9" fill="none"/></svg>
<svg class="i" style="left:1663.5px;top:168.4px" width="24" height="18" viewBox="0 0 24 18"><defs><radialGradient id="cgr" cx=".4" cy=".3" r=".8"><stop offset="0" stop-color="#6fc46a"/><stop offset="1" stop-color="#2f8f36"/></radialGradient></defs><circle cx="8" cy="8" r="6.4" fill="url(#cgr)" stroke="#2a7a2e" stroke-width=".7"/><path d="M10.6 5.7 A3.4 3.4 0 1 0 10.6 10.3" stroke="#fff" stroke-width="2" fill="none"/><path d="M16.6 11.4 L22.6 14.2 L16.6 17z" fill="#3fa05a" stroke="#fff" stroke-width="1.2" paint-order="stroke"/></svg>
<span class="t" style="left:1691px;top:168px;transform:scaleX(1.1551);transform-origin:0 50%;">io</span>
<div style="left:1258px;top:1004px;width:1px;height:22px;background:#a0a0a0"></div>
<div style="left:1259px;top:1004px;width:1px;height:22px;background:#f4f6fc"></div>
<div style="left:1377px;top:1004px;width:1px;height:22px;background:#a0a0a0"></div>
<div style="left:1378px;top:1004px;width:1px;height:22px;background:#f4f6fc"></div>
<div style="left:1489px;top:1004px;width:1px;height:22px;background:#a0a0a0"></div>
<div style="left:1490px;top:1004px;width:1px;height:22px;background:#f4f6fc"></div>
<span class="t" style="left:1266px;top:1006px;">可写</span>
<span class="t" style="left:1385px;top:1006px;">智能插入</span>
<span class="t" style="left:1497px;top:1006px;transform:scaleX(1.0391);transform-origin:0 50%;">3 : 16</span>
<svg class="i" style="left:1599px;top:1010px" width="2" height="16"><rect x="0" y="0" width="1.6" height="1.7" fill="#9c927c"/><rect x="0" y="4.3" width="1.6" height="1.7" fill="#9c927c"/><rect x="0" y="8.6" width="1.6" height="1.7" fill="#9c927c"/><rect x="0" y="13" width="1.6" height="1.7" fill="#9c927c"/></svg>
</body></html>
